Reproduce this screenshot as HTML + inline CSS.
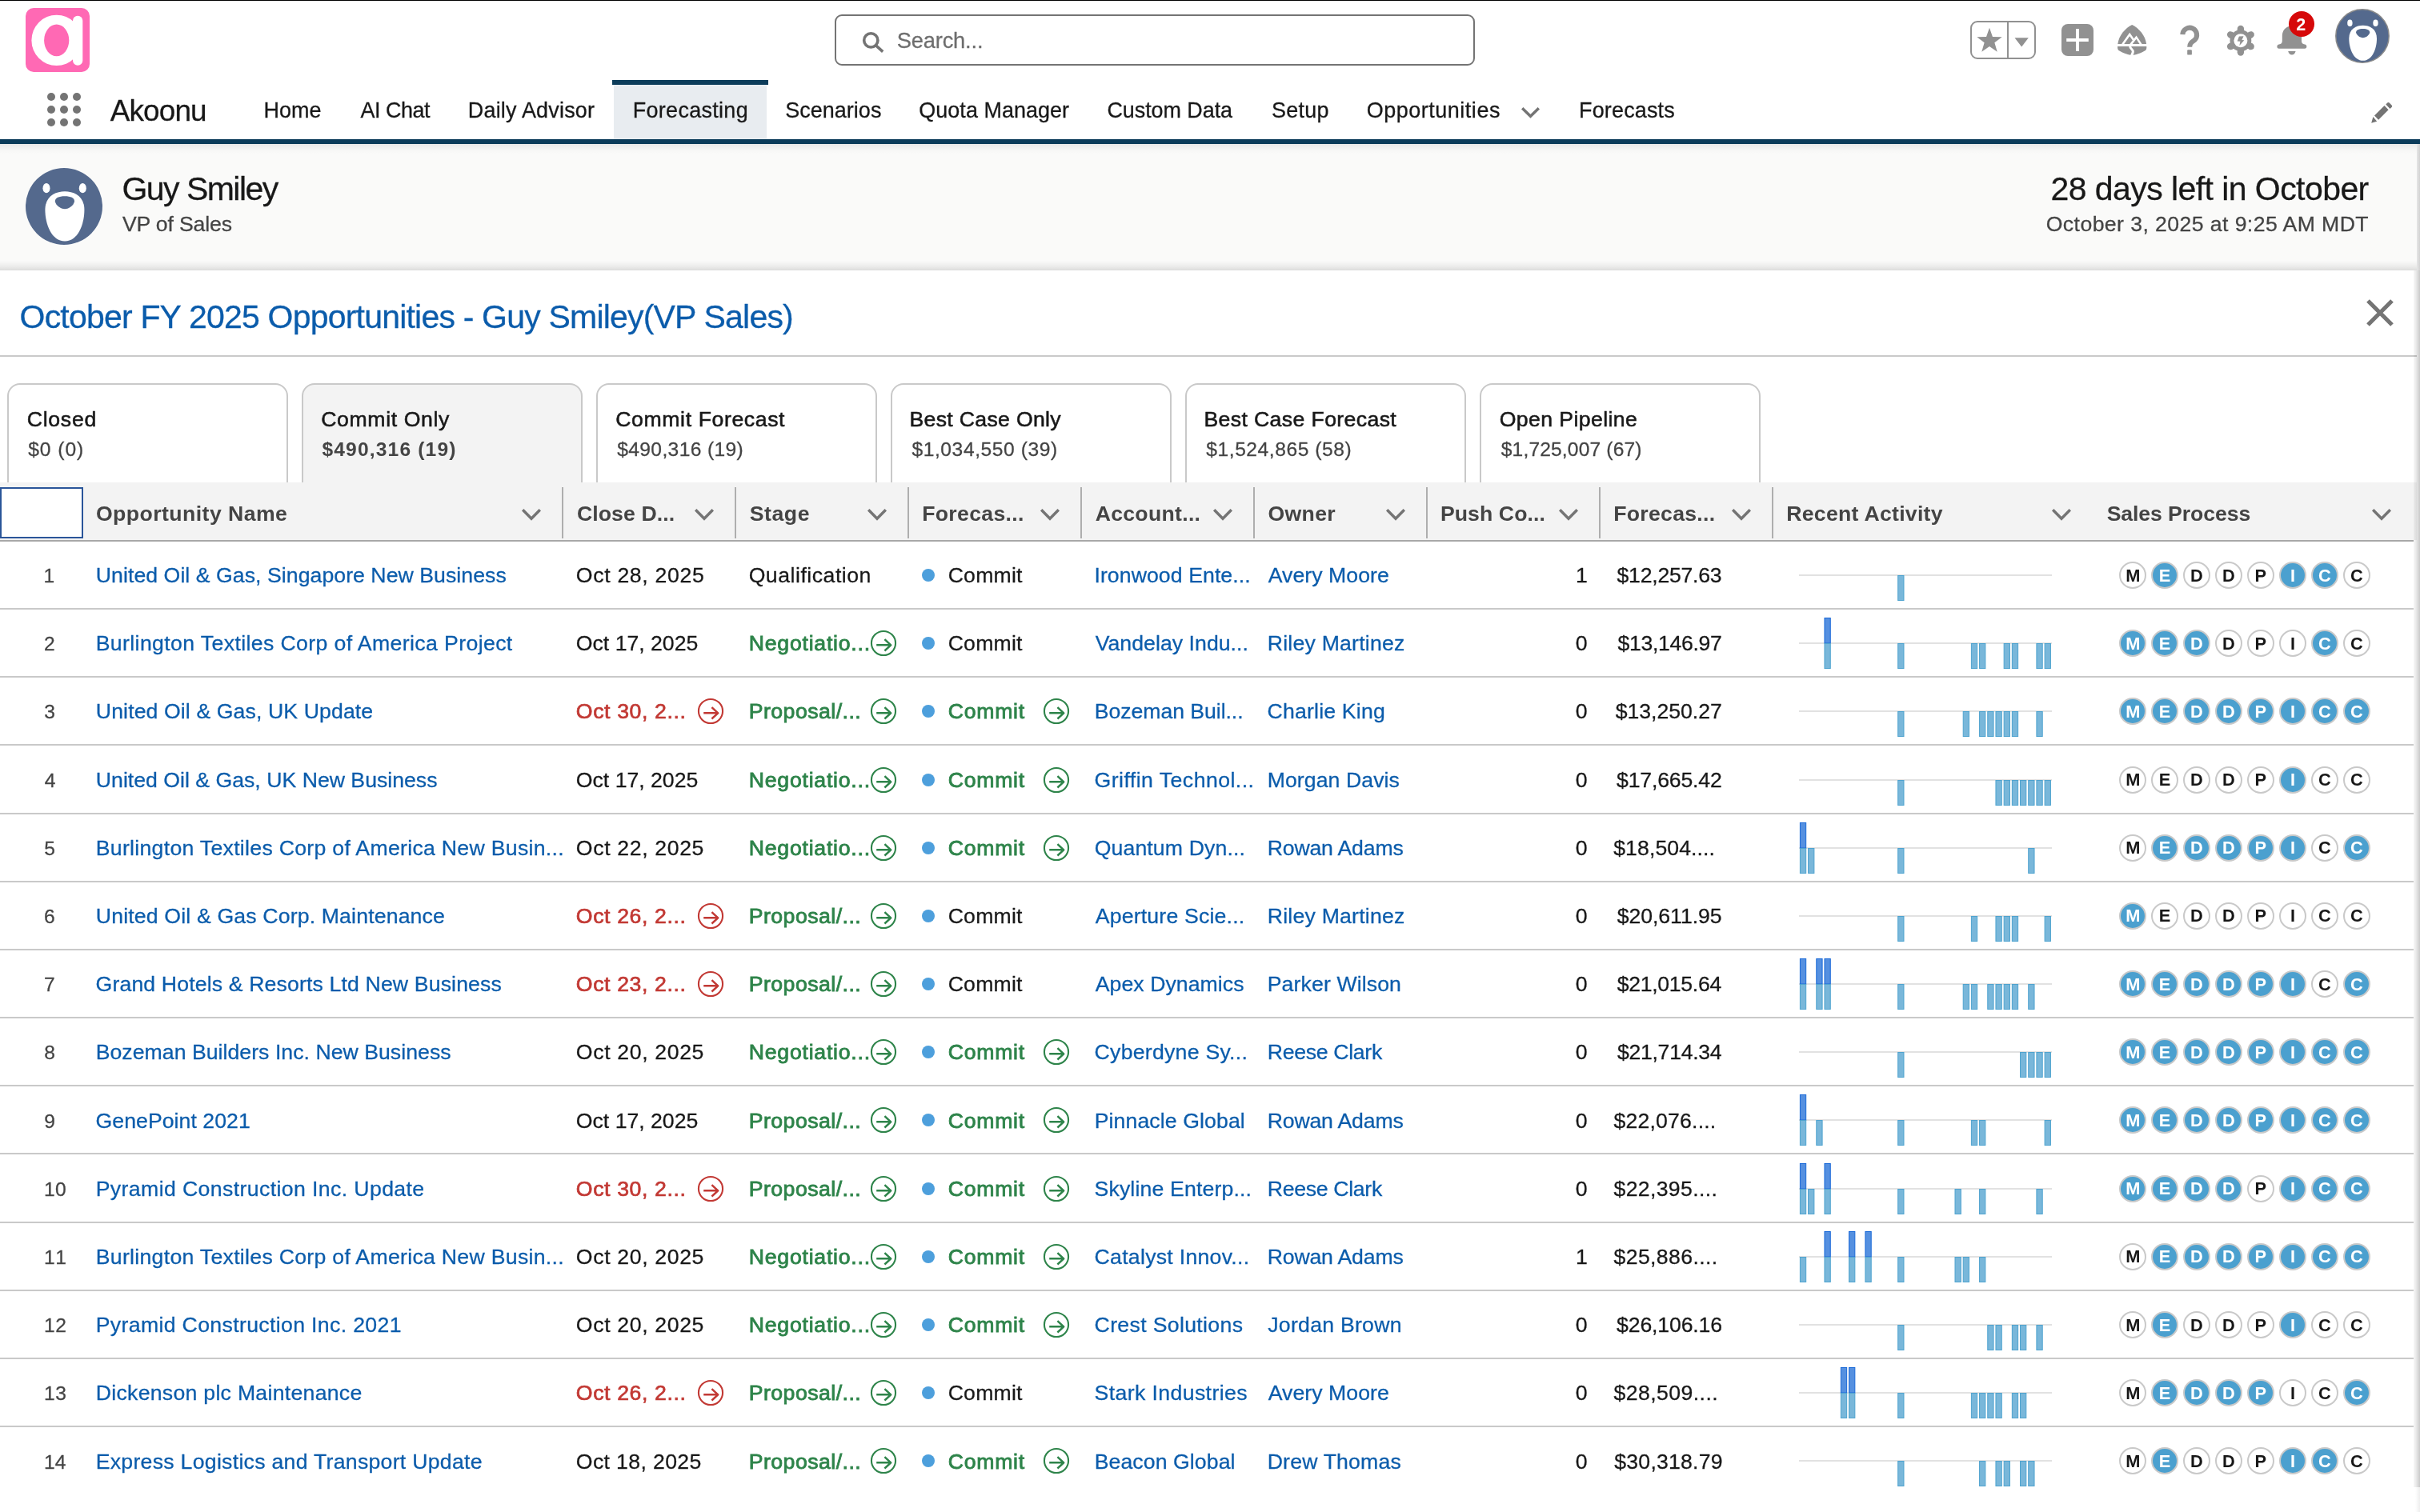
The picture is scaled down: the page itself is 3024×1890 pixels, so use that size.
<!DOCTYPE html><html><head><meta charset="utf-8"><title>Akoonu Forecasting</title><style>
html,body{margin:0;padding:0;background:#fff}
body{width:3024px;height:1890px;overflow:hidden;position:relative;font-family:"Liberation Sans",sans-serif}
#w{position:absolute;left:0;top:0;width:3024px;height:1890px;overflow:hidden;will-change:transform}
#w>div,#w>svg,#w>span{position:absolute;display:block}
#w>span{white-space:nowrap;line-height:1}

</style></head><body><div id="w">
<div style="left:0px;top:0px;width:3024px;height:1px;background:#000"></div>
<svg style="left:32px;top:10px" width="80" height="80" viewBox="0 0 80 80"><rect width="80" height="80" rx="10" fill="#ff69b4"/>
<ellipse cx="38.7" cy="40.4" rx="31.3" ry="31.7" fill="#fff"/><rect x="59" y="9.8" width="12.3" height="62" rx="6.1" fill="#fff"/>
<ellipse cx="38.7" cy="40.4" rx="15.6" ry="19.8" fill="#ff69b4"/></svg>
<div style="left:1043px;top:18px;width:800px;height:64px;box-sizing:border-box;border:2px solid #747474;border-radius:9px;background:#fff"></div>
<svg style="left:1074px;top:36px" width="36" height="36" viewBox="0 0 36 36" fill="none" stroke="#747474" stroke-width="3.6"><circle cx="14.3" cy="14.4" r="8.6"/><path d="M20.6 20.9 L29.2 28.6" stroke-linecap="butt"/></svg>
<span style="left:1120.76px;top:37px;font-size:27.27px;color:#6e6e6e;letter-spacing:-0.175px;-webkit-text-stroke:0.28px #6e6e6e">Search...</span>
<div style="left:2462px;top:26px;width:82px;height:48px;box-sizing:border-box;border:2px solid #919191;border-radius:9px;background:#fff"></div>
<div style="left:2508px;top:27px;width:2px;height:46px;background:#919191"></div>
<svg style="left:2462px;top:26px" width="82" height="48" viewBox="0 0 82 48"><polygon points="24.00,8.80 27.94,19.88 39.69,20.20 30.37,27.37 33.70,38.65 24.00,32.00 14.30,38.65 17.63,27.37 8.31,20.20 20.06,19.88" fill="#919191"/><polygon points="55.5,21.2 72.8,21.2 64.2,32.6" fill="#919191"/></svg>
<svg style="left:2576px;top:30px" width="40" height="40" viewBox="0 0 40 40"><rect width="40" height="40" rx="8" fill="#919191"/><path d="M6.2 20H33.8M20 6V34" stroke="#fff" stroke-width="3.8"/></svg>
<svg style="left:2644px;top:30px" width="40" height="40" viewBox="0 0 40 40"><path d="M20.2 1 C29 5.5 36.5 14 38 24.6 C38.6 29 38.6 31.8 37 33 C31 36.8 24 38.9 20.2 38.9 C16.4 38.9 9.4 36.8 3.4 33 C1.8 31.8 1.8 29 2.4 24.6 C3.9 14 11.4 5.5 20.2 1Z" fill="#919191"/>
<path d="M0 26.5H40" stroke="#fff" stroke-width="3.2"/><path d="M8.3 25.6 L17.2 13 L22.5 20.5" fill="none" stroke="#fff" stroke-width="2.6"/><path d="M18.5 25.6 L25.5 16.6 L31.5 25.6" fill="none" stroke="#fff" stroke-width="2.6"/>
<path d="M17.6 27.5 C17.6 31.5 22.4 32 21.2 35.5 C20.8 36.8 20.3 37.8 19.6 39.5" fill="none" stroke="#fff" stroke-width="3"/></svg>
<svg style="left:2716px;top:28px" width="40" height="44" viewBox="0 0 40 44"><path d="M11.3 15.2 A8.9 8.9 0 1 1 26.2 22.2 C22.4 24.9 20.2 26.4 20.2 30.7" fill="none" stroke="#919191" stroke-width="6.1"/><rect x="17.2" y="34.2" width="5.7" height="6.4" rx="1.2" fill="#919191"/></svg>
<svg style="left:2780px;top:31px" width="40" height="40" viewBox="0 0 40 40" fill="#919191"><g transform="rotate(0 19.9 19.7)"><rect x="15.799999999999999" y="4.899999999999999" width="8.2" height="14.8"/><circle cx="19.9" cy="4.899999999999999" r="4.15"/></g><g transform="rotate(60 19.9 19.7)"><rect x="15.799999999999999" y="4.899999999999999" width="8.2" height="14.8"/><circle cx="19.9" cy="4.899999999999999" r="4.15"/></g><g transform="rotate(120 19.9 19.7)"><rect x="15.799999999999999" y="4.899999999999999" width="8.2" height="14.8"/><circle cx="19.9" cy="4.899999999999999" r="4.15"/></g><g transform="rotate(180 19.9 19.7)"><rect x="15.799999999999999" y="4.899999999999999" width="8.2" height="14.8"/><circle cx="19.9" cy="4.899999999999999" r="4.15"/></g><g transform="rotate(240 19.9 19.7)"><rect x="15.799999999999999" y="4.899999999999999" width="8.2" height="14.8"/><circle cx="19.9" cy="4.899999999999999" r="4.15"/></g><g transform="rotate(300 19.9 19.7)"><rect x="15.799999999999999" y="4.899999999999999" width="8.2" height="14.8"/><circle cx="19.9" cy="4.899999999999999" r="4.15"/></g><circle cx="19.9" cy="19.7" r="13.4"/><circle cx="19.9" cy="19.7" r="8.5" fill="#fff"/>
<path transform="translate(19.9 19.7)" d="M3.65 -5.5 L-2 -5.2 L-4.25 0.7 L-0.5 1 L-1.55 6.3 L4.45 -0.4 L1.5 -0.75 Z"/></svg>
<svg style="left:2842px;top:28px" width="46" height="44" viewBox="0 0 46 44" fill="#919191"><path d="M21.9 4.4 C14 4.4 9.8 10 9.8 17 V23 C9.8 26 8.4 27.2 5.8 27.5 C2.6 27.9 2.6 32.8 5.8 32.8 H38 C41.2 32.8 41.2 27.9 38 27.5 C35.4 27.2 34 26 34 23 V17 C34 10 29.8 4.4 21.9 4.4Z"/><path d="M17.2 36 H26.6 C25.8 39.2 24 40.6 21.9 40.6 C19.8 40.6 18 39.2 17.2 36Z"/></svg>
<div style="left:2860px;top:14px;width:32px;height:32px;border-radius:50%;background:#d6090a"></div>
<span style="left:2869.25px;top:21px;font-size:21.52px;color:#fff;letter-spacing:0.248px;font-weight:700">2</span>
<svg style="left:2918px;top:11px" width="68" height="68" viewBox="0 0 68 68"><circle cx="34" cy="34" r="33.2" fill="#54698d" stroke="#8a8a8a" stroke-width="1.5"/>
<ellipse cx="18.4" cy="17.8" rx="3.2" ry="4.3" fill="#fff"/><ellipse cx="50.5" cy="17.8" rx="3.2" ry="4.3" fill="#fff"/>
<path d="M34.7 20.7 C43 20.7 52 25 52 37 C52 50 46.3 64.8 34.7 64.8 C23.1 64.8 17.3 50 17.3 37 C17.3 25 26.4 20.7 34.7 20.7Z" fill="#fff"/>
<path d="M34.7 24.9 C40 24.9 43.2 26.5 43.2 29.3 C43.2 32.5 38.5 36.3 34.7 36.3 C30.9 36.3 26.1 32.5 26.1 29.3 C26.1 26.5 29.4 24.9 34.7 24.9Z" fill="#54698d"/></svg>
<svg style="left:0;top:0" width="120" height="170" viewBox="0 0 120 170" fill="#747474"><circle cx="64" cy="121" r="5"/><circle cx="64" cy="137" r="5"/><circle cx="64" cy="153" r="5"/><circle cx="80" cy="121" r="5"/><circle cx="80" cy="137" r="5"/><circle cx="80" cy="153" r="5"/><circle cx="96" cy="121" r="5"/><circle cx="96" cy="137" r="5"/><circle cx="96" cy="153" r="5"/></svg>
<span style="left:137.73px;top:121px;font-size:36.90px;color:#181818;letter-spacing:-0.841px;-webkit-text-stroke:0.28px #181818">Akoonu</span>
<div style="left:765px;top:100px;width:195px;height:6px;background:#0c3c5a"></div>
<div style="left:767px;top:106px;width:191px;height:68px;background:#e8ecf0"></div>
<span style="left:329.49px;top:125px;font-size:26.96px;color:#181818;letter-spacing:0.034px;-webkit-text-stroke:0.28px #181818">Home</span>
<span style="left:450.45px;top:125px;font-size:26.96px;color:#181818;letter-spacing:-0.490px;-webkit-text-stroke:0.28px #181818">AI Chat</span>
<span style="left:584.79px;top:125px;font-size:26.96px;color:#181818;letter-spacing:0.205px;-webkit-text-stroke:0.28px #181818">Daily Advisor</span>
<span style="left:790.79px;top:125px;font-size:26.96px;color:#181818;letter-spacing:0.302px;-webkit-text-stroke:0.28px #181818">Forecasting</span>
<span style="left:981.18px;top:125px;font-size:26.96px;color:#181818;letter-spacing:0.042px;-webkit-text-stroke:0.28px #181818">Scenarios</span>
<span style="left:1148.32px;top:125px;font-size:26.96px;color:#181818;letter-spacing:0.036px;-webkit-text-stroke:0.28px #181818">Quota Manager</span>
<span style="left:1383.43px;top:125px;font-size:26.96px;color:#181818;letter-spacing:-0.063px;-webkit-text-stroke:0.28px #181818">Custom Data</span>
<span style="left:1589.08px;top:125px;font-size:26.96px;color:#181818;letter-spacing:0.230px;-webkit-text-stroke:0.28px #181818">Setup</span>
<span style="left:1707.82px;top:125px;font-size:26.96px;color:#181818;letter-spacing:0.520px;-webkit-text-stroke:0.28px #181818">Opportunities</span>
<span style="left:1972.99px;top:125px;font-size:26.96px;color:#181818;letter-spacing:0.182px;-webkit-text-stroke:0.28px #181818">Forecasts</span>
<svg style="left:1897.5px;top:131.25px" width="29" height="18.5" viewBox="-3 -3 29 18.5"><path d="M1.2 1.2 L11.5 11.3 L21.8 1.2" fill="none" stroke="#747474" stroke-width="3.4" stroke-linejoin="miter"/></svg>
<svg style="left:2958px;top:124px" width="36" height="36" viewBox="0 0 36 36" fill="#747474"><path d="M21.5 8 L26.6 13.2 L14.1 25.7 L9 20.5 Z"/><path d="M23.3 6.4 L25.2 4.6 C25.9 3.9 27 3.9 27.7 4.6 L30.6 7.4 C31.3 8.1 31.3 9.2 30.6 9.9 L28.5 11.9 Z"/><path d="M7.4 22.1 L12.2 27.7 L5.2 29.8 Z"/></svg>
<div style="left:0px;top:174px;width:3024px;height:6px;background:#0c3c5a"></div>
<div style="left:0px;top:180px;width:3021px;height:157.5px;background:linear-gradient(#e9e9e8 0,#f6f6f5 7px,#fafaf9 12px,#fafaf9 146px,#ececeb 153px,#dededd 157.5px)"></div>
<svg style="left:32px;top:210px" width="96" height="96" viewBox="0 0 68 68"><circle cx="34" cy="34" r="34" fill="#54698d"/>
<ellipse cx="18.4" cy="17.8" rx="3.2" ry="4.3" fill="#fff"/><ellipse cx="50.5" cy="17.8" rx="3.2" ry="4.3" fill="#fff"/>
<path d="M34.7 20.7 C43 20.7 52 25 52 37 C52 50 46.3 64.8 34.7 64.8 C23.1 64.8 17.3 50 17.3 37 C17.3 25 26.4 20.7 34.7 20.7Z" fill="#fff"/>
<path d="M34.7 24.9 C40 24.9 43.2 26.5 43.2 29.3 C43.2 32.5 38.5 36.3 34.7 36.3 C30.9 36.3 26.1 32.5 26.1 29.3 C26.1 26.5 29.4 24.9 34.7 24.9Z" fill="#54698d"/></svg>
<span style="left:152.44px;top:216px;font-size:41.00px;color:#181818;letter-spacing:-1.530px;-webkit-text-stroke:0.28px #181818">Guy Smiley</span>
<span style="left:152.88px;top:267px;font-size:26.65px;color:#444;letter-spacing:-0.164px;-webkit-text-stroke:0.28px #444">VP of Sales</span>
<span style="left:2562.44px;top:216px;font-size:41.00px;color:#181818;letter-spacing:-0.563px;-webkit-text-stroke:0.28px #181818">28 days left in October</span>
<span style="left:2556.74px;top:267px;font-size:26.65px;color:#444;letter-spacing:0.412px;-webkit-text-stroke:0.28px #444">October 3, 2025 at 9:25 AM MDT</span>
<div style="left:3020px;top:180px;width:4px;height:158px;background:linear-gradient(90deg,#e6e6e6,#d2d2d2)"></div>
<span style="left:24.56px;top:376px;font-size:41.00px;color:#0b5cab;letter-spacing:-0.800px;-webkit-text-stroke:0.28px #0b5cab">October FY 2025 Opportunities - Guy Smiley(VP Sales)</span>
<svg style="left:2952px;top:369px" width="44" height="44" viewBox="0 0 44 44"><path d="M7 7 L37 37 M37 7 L7 37" stroke="#747474" stroke-width="5.2" stroke-linecap="butt"/></svg>
<div style="left:0px;top:444px;width:3020px;height:2px;background:#c9c9c9"></div>
<div style="left:9px;top:479px;width:351px;height:140px;box-sizing:border-box;border:2px solid #c9c9c9;border-radius:16px;background:#fff"></div>
<span style="left:33.65px;top:511px;font-size:26.65px;color:#181818;letter-spacing:0.747px;-webkit-text-stroke:0.55px #181818">Closed</span>
<span style="left:35.24px;top:550px;font-size:24.60px;color:#444;letter-spacing:0.948px;-webkit-text-stroke:0.28px #444">$0 (0)</span>
<div style="left:377px;top:479px;width:351px;height:140px;box-sizing:border-box;border:2px solid #c9c9c9;border-radius:16px;background:#f3f3f3"></div>
<span style="left:401.25px;top:511px;font-size:26.65px;color:#181818;letter-spacing:0.615px;-webkit-text-stroke:0.55px #181818">Commit Only</span>
<span style="left:402.48px;top:550px;font-size:24.60px;color:#444;letter-spacing:1.149px;font-weight:700">$490,316 (19)</span>
<div style="left:745px;top:479px;width:351px;height:140px;box-sizing:border-box;border:2px solid #c9c9c9;border-radius:16px;background:#fff"></div>
<span style="left:769.25px;top:511px;font-size:26.65px;color:#181818;letter-spacing:0.604px;-webkit-text-stroke:0.55px #181818">Commit Forecast</span>
<span style="left:771.24px;top:550px;font-size:24.60px;color:#444;letter-spacing:0.369px;-webkit-text-stroke:0.28px #444">$490,316 (19)</span>
<div style="left:1113px;top:479px;width:351px;height:140px;box-sizing:border-box;border:2px solid #c9c9c9;border-radius:16px;background:#fff"></div>
<span style="left:1136.51px;top:511px;font-size:26.65px;color:#181818;letter-spacing:0.311px;-webkit-text-stroke:0.55px #181818">Best Case Only</span>
<span style="left:1139.44px;top:550px;font-size:24.60px;color:#444;letter-spacing:0.580px;-webkit-text-stroke:0.28px #444">$1,034,550 (39)</span>
<div style="left:1481px;top:479px;width:351px;height:140px;box-sizing:border-box;border:2px solid #c9c9c9;border-radius:16px;background:#fff"></div>
<span style="left:1504.41px;top:511px;font-size:26.65px;color:#181818;letter-spacing:0.378px;-webkit-text-stroke:0.55px #181818">Best Case Forecast</span>
<span style="left:1507.34px;top:550px;font-size:24.60px;color:#444;letter-spacing:0.544px;-webkit-text-stroke:0.28px #444">$1,524,865 (58)</span>
<div style="left:1849px;top:479px;width:351px;height:140px;box-sizing:border-box;border:2px solid #c9c9c9;border-radius:16px;background:#fff"></div>
<span style="left:1873.74px;top:511px;font-size:26.65px;color:#181818;letter-spacing:0.389px;-webkit-text-stroke:0.55px #181818">Open Pipeline</span>
<span style="left:1875.74px;top:550px;font-size:24.60px;color:#444;letter-spacing:0.151px;-webkit-text-stroke:0.28px #444">$1,725,007 (67)</span>
<div style="left:0px;top:603px;width:3020px;height:72px;background:#f3f3f3"></div>
<div style="left:0px;top:675px;width:3016px;height:2px;background:#a8a8a8"></div>
<div style="left:0px;top:609px;width:104px;height:64px;box-sizing:border-box;border:2px solid #2a5599;background:#fff"></div>
<div style="left:702px;top:609px;width:2px;height:64px;background:#aeaeae"></div>
<div style="left:918px;top:609px;width:2px;height:64px;background:#aeaeae"></div>
<div style="left:1134px;top:609px;width:2px;height:64px;background:#aeaeae"></div>
<div style="left:1350px;top:609px;width:2px;height:64px;background:#aeaeae"></div>
<div style="left:1566px;top:609px;width:2px;height:64px;background:#aeaeae"></div>
<div style="left:1782px;top:609px;width:2px;height:64px;background:#aeaeae"></div>
<div style="left:1998px;top:609px;width:2px;height:64px;background:#aeaeae"></div>
<div style="left:2214px;top:609px;width:2px;height:64px;background:#aeaeae"></div>
<span style="left:119.91px;top:629px;font-size:26.65px;color:#444;letter-spacing:0.441px;font-weight:700">Opportunity Name</span>
<svg style="left:649.0px;top:633.25px" width="30" height="19.5" viewBox="-3 -3 30 19.5"><path d="M1.2 1.2 L12.0 12.3 L22.8 1.2" fill="none" stroke="#747474" stroke-width="3.4" stroke-linejoin="miter"/></svg>
<span style="left:720.91px;top:629px;font-size:26.65px;color:#444;letter-spacing:0.091px;font-weight:700">Close D...</span>
<svg style="left:865.0px;top:633.25px" width="30" height="19.5" viewBox="-3 -3 30 19.5"><path d="M1.2 1.2 L12.0 12.3 L22.8 1.2" fill="none" stroke="#747474" stroke-width="3.4" stroke-linejoin="miter"/></svg>
<span style="left:936.73px;top:629px;font-size:26.65px;color:#444;letter-spacing:0.558px;font-weight:700">Stage</span>
<svg style="left:1081.0px;top:633.25px" width="30" height="19.5" viewBox="-3 -3 30 19.5"><path d="M1.2 1.2 L12.0 12.3 L22.8 1.2" fill="none" stroke="#747474" stroke-width="3.4" stroke-linejoin="miter"/></svg>
<span style="left:1152.22px;top:629px;font-size:26.65px;color:#444;letter-spacing:0.303px;font-weight:700">Forecas...</span>
<svg style="left:1297.0px;top:633.25px" width="30" height="19.5" viewBox="-3 -3 30 19.5"><path d="M1.2 1.2 L12.0 12.3 L22.8 1.2" fill="none" stroke="#747474" stroke-width="3.4" stroke-linejoin="miter"/></svg>
<span style="left:1368.64px;top:629px;font-size:26.65px;color:#444;letter-spacing:0.291px;font-weight:700">Account...</span>
<svg style="left:1513.0px;top:633.25px" width="30" height="19.5" viewBox="-3 -3 30 19.5"><path d="M1.2 1.2 L12.0 12.3 L22.8 1.2" fill="none" stroke="#747474" stroke-width="3.4" stroke-linejoin="miter"/></svg>
<span style="left:1584.41px;top:629px;font-size:26.65px;color:#444;letter-spacing:0.348px;font-weight:700">Owner</span>
<svg style="left:1729.0px;top:633.25px" width="30" height="19.5" viewBox="-3 -3 30 19.5"><path d="M1.2 1.2 L12.0 12.3 L22.8 1.2" fill="none" stroke="#747474" stroke-width="3.4" stroke-linejoin="miter"/></svg>
<span style="left:1799.92px;top:629px;font-size:26.65px;color:#444;letter-spacing:0.084px;font-weight:700">Push Co...</span>
<svg style="left:1945.0px;top:633.25px" width="30" height="19.5" viewBox="-3 -3 30 19.5"><path d="M1.2 1.2 L12.0 12.3 L22.8 1.2" fill="none" stroke="#747474" stroke-width="3.4" stroke-linejoin="miter"/></svg>
<span style="left:2016.22px;top:629px;font-size:26.65px;color:#444;letter-spacing:0.281px;font-weight:700">Forecas...</span>
<svg style="left:2161.0px;top:633.25px" width="30" height="19.5" viewBox="-3 -3 30 19.5"><path d="M1.2 1.2 L12.0 12.3 L22.8 1.2" fill="none" stroke="#747474" stroke-width="3.4" stroke-linejoin="miter"/></svg>
<span style="left:2232.22px;top:629px;font-size:26.65px;color:#444;letter-spacing:0.274px;font-weight:700">Recent Activity</span>
<svg style="left:2561.0px;top:633.25px" width="30" height="19.5" viewBox="-3 -3 30 19.5"><path d="M1.2 1.2 L12.0 12.3 L22.8 1.2" fill="none" stroke="#747474" stroke-width="3.4" stroke-linejoin="miter"/></svg>
<span style="left:2632.63px;top:629px;font-size:26.65px;color:#444;letter-spacing:-0.087px;font-weight:700">Sales Process</span>
<svg style="left:2961.0px;top:633.25px" width="30" height="19.5" viewBox="-3 -3 30 19.5"><path d="M1.2 1.2 L12.0 12.3 L22.8 1.2" fill="none" stroke="#747474" stroke-width="3.4" stroke-linejoin="miter"/></svg>
<div style="left:0px;top:760px;width:3016px;height:2px;background:#c9c9c9"></div>
<span style="left:54.43px;top:708px;font-size:24.60px;color:#444;letter-spacing:0.284px;-webkit-text-stroke:0.28px #444">1</span>
<span style="left:119.84px;top:706px;font-size:26.65px;color:#0b5cab;letter-spacing:0.053px;-webkit-text-stroke:0.28px #0b5cab">United Oil &amp; Gas, Singapore New Business</span>
<span style="left:719.84px;top:706px;font-size:26.65px;color:#181818;letter-spacing:0.676px;-webkit-text-stroke:0.28px #181818">Oct 28, 2025</span>
<span style="left:935.64px;top:706px;font-size:26.65px;color:#181818;letter-spacing:0.515px;-webkit-text-stroke:0.28px #181818">Qualification</span>
<div style="left:1152px;top:711.0px;width:16px;height:16px;border-radius:50%;background:#4d9fdc"></div>
<span style="left:1184.65px;top:706px;font-size:26.65px;color:#181818;letter-spacing:0.217px;-webkit-text-stroke:0.28px #181818">Commit</span>
<span style="left:1367.44px;top:706px;font-size:26.65px;color:#0b5cab;letter-spacing:0.078px;-webkit-text-stroke:0.28px #0b5cab">Ironwood Ente...</span>
<span style="left:1584.75px;top:706px;font-size:26.65px;color:#0b5cab;letter-spacing:0.050px;-webkit-text-stroke:0.28px #0b5cab">Avery Moore</span>
<span style="left:1968.97px;top:706px;font-size:26.65px;color:#181818;letter-spacing:0.307px;-webkit-text-stroke:0.28px #181818">1</span>
<span style="left:2020.51px;top:706px;font-size:26.65px;color:#181818;letter-spacing:-0.243px;-webkit-text-stroke:0.28px #181818">$12,257.63</span>
<svg style="left:2240px;top:683.00px" width="332" height="72" viewBox="2240 -36 332 72"><rect x="2248" y="-1" width="316" height="2" fill="#e2e2e2"/><rect x="2371.68" y="0.5" width="7.3" height="31" fill="#79b7da" stroke="#4ea3cf" stroke-width="1"/></svg>
<div style="left:2648.3px;top:702.0px;width:34px;height:34px;box-sizing:border-box;border-radius:50%;border:2px solid #c9c9c9;background:#fff"></div>
<span style="left:2656.21px;top:709px;font-size:21.83px;color:#181818;font-weight:700">M</span>
<div style="left:2688.3px;top:702.0px;width:34px;height:34px;box-sizing:border-box;border-radius:50%;border:2px solid #c9c9c9;background:#4ba0cf"></div>
<span style="left:2697.68px;top:709px;font-size:21.83px;color:#fff;font-weight:700">E</span>
<div style="left:2728.2px;top:702.0px;width:34px;height:34px;box-sizing:border-box;border-radius:50%;border:2px solid #c9c9c9;background:#fff"></div>
<span style="left:2737.09px;top:709px;font-size:21.83px;color:#181818;font-weight:700">D</span>
<div style="left:2768.2px;top:702.0px;width:34px;height:34px;box-sizing:border-box;border-radius:50%;border:2px solid #c9c9c9;background:#fff"></div>
<span style="left:2777.06px;top:709px;font-size:21.83px;color:#181818;font-weight:700">D</span>
<div style="left:2808.2px;top:702.0px;width:34px;height:34px;box-sizing:border-box;border-radius:50%;border:2px solid #c9c9c9;background:#fff"></div>
<span style="left:2817.54px;top:709px;font-size:21.83px;color:#181818;font-weight:700">P</span>
<div style="left:2848.2px;top:702.0px;width:34px;height:34px;box-sizing:border-box;border-radius:50%;border:2px solid #c9c9c9;background:#4ba0cf"></div>
<span style="left:2862.11px;top:709px;font-size:21.83px;color:#fff;font-weight:700">I</span>
<div style="left:2888.1px;top:702.0px;width:34px;height:34px;box-sizing:border-box;border-radius:50%;border:2px solid #c9c9c9;background:#4ba0cf"></div>
<span style="left:2897.09px;top:709px;font-size:21.83px;color:#fff;font-weight:700">C</span>
<div style="left:2928.1px;top:702.0px;width:34px;height:34px;box-sizing:border-box;border-radius:50%;border:2px solid #c9c9c9;background:#fff"></div>
<span style="left:2937.06px;top:709px;font-size:21.83px;color:#181818;font-weight:700">C</span>
<div style="left:0px;top:845px;width:3016px;height:2px;background:#c9c9c9"></div>
<span style="left:55.06px;top:793px;font-size:24.60px;color:#444;letter-spacing:0.284px;-webkit-text-stroke:0.28px #444">2</span>
<span style="left:119.71px;top:791px;font-size:26.65px;color:#0b5cab;letter-spacing:0.384px;-webkit-text-stroke:0.28px #0b5cab">Burlington Textiles Corp of America Project</span>
<span style="left:719.84px;top:791px;font-size:26.65px;color:#181818;letter-spacing:-0.006px;-webkit-text-stroke:0.28px #181818">Oct 17, 2025</span>
<span style="left:935.71px;top:791px;font-size:26.65px;color:#2e844a;letter-spacing:0.771px;-webkit-text-stroke:0.85px #2e844a">Negotiatio...</span>
<svg style="left:1086px;top:786.1800000000001px" width="36" height="36" viewBox="-18 -18 36 36" fill="none" stroke="#2e844a" stroke-width="2.1"><circle r="15.05"/><path d="M-8.8 2.3 H8.6 M1.4 -4.9 L9.2 2.3 L1.4 9.5" stroke-width="2.5" stroke-linejoin="round"/></svg>
<div style="left:1152px;top:796.1800000000001px;width:16px;height:16px;border-radius:50%;background:#4d9fdc"></div>
<span style="left:1184.65px;top:791px;font-size:26.65px;color:#181818;letter-spacing:0.217px;-webkit-text-stroke:0.28px #181818">Commit</span>
<span style="left:1368.68px;top:791px;font-size:26.65px;color:#0b5cab;letter-spacing:0.045px;-webkit-text-stroke:0.28px #0b5cab">Vandelay Indu...</span>
<span style="left:1583.71px;top:791px;font-size:26.65px;color:#0b5cab;letter-spacing:0.218px;-webkit-text-stroke:0.28px #0b5cab">Riley Martinez</span>
<span style="left:1968.71px;top:791px;font-size:26.65px;color:#181818;letter-spacing:0.307px;-webkit-text-stroke:0.28px #181818">0</span>
<span style="left:2021.61px;top:791px;font-size:26.65px;color:#181818;letter-spacing:-0.346px;-webkit-text-stroke:0.28px #181818">$13,146.97</span>
<svg style="left:2240px;top:768.18px" width="332" height="72" viewBox="2240 -36 332 72"><rect x="2248" y="-1" width="316" height="2" fill="#e2e2e2"/><rect x="2279.97" y="-31.5" width="7.3" height="31.5" fill="#5590e0" stroke="#1a69d8" stroke-width="1"/><rect x="2279.97" y="0.5" width="7.3" height="31" fill="#79b7da" stroke="#4ea3cf" stroke-width="1"/><rect x="2371.68" y="0.5" width="7.3" height="31" fill="#79b7da" stroke="#4ea3cf" stroke-width="1"/><rect x="2463.39" y="0.5" width="7.3" height="31" fill="#79b7da" stroke="#4ea3cf" stroke-width="1"/><rect x="2473.58" y="0.5" width="7.3" height="31" fill="#79b7da" stroke="#4ea3cf" stroke-width="1"/><rect x="2504.15" y="0.5" width="7.3" height="31" fill="#79b7da" stroke="#4ea3cf" stroke-width="1"/><rect x="2514.34" y="0.5" width="7.3" height="31" fill="#79b7da" stroke="#4ea3cf" stroke-width="1"/><rect x="2544.91" y="0.5" width="7.3" height="31" fill="#79b7da" stroke="#4ea3cf" stroke-width="1"/><rect x="2555.10" y="0.5" width="7.3" height="31" fill="#79b7da" stroke="#4ea3cf" stroke-width="1"/></svg>
<div style="left:2648.3px;top:787.2px;width:34px;height:34px;box-sizing:border-box;border-radius:50%;border:2px solid #c9c9c9;background:#4ba0cf"></div>
<span style="left:2656.21px;top:794px;font-size:21.83px;color:#fff;font-weight:700">M</span>
<div style="left:2688.3px;top:787.2px;width:34px;height:34px;box-sizing:border-box;border-radius:50%;border:2px solid #c9c9c9;background:#4ba0cf"></div>
<span style="left:2697.68px;top:794px;font-size:21.83px;color:#fff;font-weight:700">E</span>
<div style="left:2728.2px;top:787.2px;width:34px;height:34px;box-sizing:border-box;border-radius:50%;border:2px solid #c9c9c9;background:#4ba0cf"></div>
<span style="left:2737.09px;top:794px;font-size:21.83px;color:#fff;font-weight:700">D</span>
<div style="left:2768.2px;top:787.2px;width:34px;height:34px;box-sizing:border-box;border-radius:50%;border:2px solid #c9c9c9;background:#fff"></div>
<span style="left:2777.06px;top:794px;font-size:21.83px;color:#181818;font-weight:700">D</span>
<div style="left:2808.2px;top:787.2px;width:34px;height:34px;box-sizing:border-box;border-radius:50%;border:2px solid #c9c9c9;background:#fff"></div>
<span style="left:2817.54px;top:794px;font-size:21.83px;color:#181818;font-weight:700">P</span>
<div style="left:2848.2px;top:787.2px;width:34px;height:34px;box-sizing:border-box;border-radius:50%;border:2px solid #c9c9c9;background:#fff"></div>
<span style="left:2862.11px;top:794px;font-size:21.83px;color:#181818;font-weight:700">I</span>
<div style="left:2888.1px;top:787.2px;width:34px;height:34px;box-sizing:border-box;border-radius:50%;border:2px solid #c9c9c9;background:#4ba0cf"></div>
<span style="left:2897.09px;top:794px;font-size:21.83px;color:#fff;font-weight:700">C</span>
<div style="left:2928.1px;top:787.2px;width:34px;height:34px;box-sizing:border-box;border-radius:50%;border:2px solid #c9c9c9;background:#fff"></div>
<span style="left:2937.06px;top:794px;font-size:21.83px;color:#181818;font-weight:700">C</span>
<div style="left:0px;top:930px;width:3016px;height:2px;background:#c9c9c9"></div>
<span style="left:55.36px;top:878px;font-size:24.60px;color:#444;letter-spacing:0.284px;-webkit-text-stroke:0.28px #444">3</span>
<span style="left:119.84px;top:876px;font-size:26.65px;color:#0b5cab;letter-spacing:0.108px;-webkit-text-stroke:0.28px #0b5cab">United Oil &amp; Gas, UK Update</span>
<span style="left:719.84px;top:876px;font-size:26.65px;color:#c23934;letter-spacing:0.626px;-webkit-text-stroke:0.7px #c23934">Oct 30, 2...</span>
<svg style="left:870.2px;top:871.36px" width="36" height="36" viewBox="-18 -18 36 36" fill="none" stroke="#c23934" stroke-width="2.1"><circle r="15.05"/><path d="M-8.8 2.3 H8.6 M1.4 -4.9 L9.2 2.3 L1.4 9.5" stroke-width="2.5" stroke-linejoin="round"/></svg>
<span style="left:935.71px;top:876px;font-size:26.65px;color:#2e844a;letter-spacing:0.478px;-webkit-text-stroke:0.85px #2e844a">Proposal/...</span>
<svg style="left:1086px;top:871.36px" width="36" height="36" viewBox="-18 -18 36 36" fill="none" stroke="#2e844a" stroke-width="2.1"><circle r="15.05"/><path d="M-8.8 2.3 H8.6 M1.4 -4.9 L9.2 2.3 L1.4 9.5" stroke-width="2.5" stroke-linejoin="round"/></svg>
<div style="left:1152px;top:881.36px;width:16px;height:16px;border-radius:50%;background:#4d9fdc"></div>
<span style="left:1184.65px;top:876px;font-size:26.65px;color:#2e844a;letter-spacing:0.757px;-webkit-text-stroke:0.85px #2e844a">Commit</span>
<svg style="left:1302px;top:871.36px" width="36" height="36" viewBox="-18 -18 36 36" fill="none" stroke="#2e844a" stroke-width="2.1"><circle r="15.05"/><path d="M-8.8 2.3 H8.6 M1.4 -4.9 L9.2 2.3 L1.4 9.5" stroke-width="2.5" stroke-linejoin="round"/></svg>
<span style="left:1367.71px;top:876px;font-size:26.65px;color:#0b5cab;letter-spacing:-0.047px;-webkit-text-stroke:0.28px #0b5cab">Bozeman Buil...</span>
<span style="left:1583.55px;top:876px;font-size:26.65px;color:#0b5cab;letter-spacing:0.186px;-webkit-text-stroke:0.28px #0b5cab">Charlie King</span>
<span style="left:1968.71px;top:876px;font-size:26.65px;color:#181818;letter-spacing:0.307px;-webkit-text-stroke:0.28px #181818">0</span>
<span style="left:2018.71px;top:876px;font-size:26.65px;color:#181818;letter-spacing:-0.024px;-webkit-text-stroke:0.28px #181818">$13,250.27</span>
<svg style="left:2240px;top:853.36px" width="332" height="72" viewBox="2240 -36 332 72"><rect x="2248" y="-1" width="316" height="2" fill="#e2e2e2"/><rect x="2371.68" y="0.5" width="7.3" height="31" fill="#79b7da" stroke="#4ea3cf" stroke-width="1"/><rect x="2453.20" y="0.5" width="7.3" height="31" fill="#79b7da" stroke="#4ea3cf" stroke-width="1"/><rect x="2473.58" y="0.5" width="7.3" height="31" fill="#79b7da" stroke="#4ea3cf" stroke-width="1"/><rect x="2483.77" y="0.5" width="7.3" height="31" fill="#79b7da" stroke="#4ea3cf" stroke-width="1"/><rect x="2493.96" y="0.5" width="7.3" height="31" fill="#79b7da" stroke="#4ea3cf" stroke-width="1"/><rect x="2504.15" y="0.5" width="7.3" height="31" fill="#79b7da" stroke="#4ea3cf" stroke-width="1"/><rect x="2514.34" y="0.5" width="7.3" height="31" fill="#79b7da" stroke="#4ea3cf" stroke-width="1"/><rect x="2544.91" y="0.5" width="7.3" height="31" fill="#79b7da" stroke="#4ea3cf" stroke-width="1"/></svg>
<div style="left:2648.3px;top:872.4px;width:34px;height:34px;box-sizing:border-box;border-radius:50%;border:2px solid #c9c9c9;background:#4ba0cf"></div>
<span style="left:2656.21px;top:879px;font-size:21.83px;color:#fff;font-weight:700">M</span>
<div style="left:2688.3px;top:872.4px;width:34px;height:34px;box-sizing:border-box;border-radius:50%;border:2px solid #c9c9c9;background:#4ba0cf"></div>
<span style="left:2697.68px;top:879px;font-size:21.83px;color:#fff;font-weight:700">E</span>
<div style="left:2728.2px;top:872.4px;width:34px;height:34px;box-sizing:border-box;border-radius:50%;border:2px solid #c9c9c9;background:#4ba0cf"></div>
<span style="left:2737.09px;top:879px;font-size:21.83px;color:#fff;font-weight:700">D</span>
<div style="left:2768.2px;top:872.4px;width:34px;height:34px;box-sizing:border-box;border-radius:50%;border:2px solid #c9c9c9;background:#4ba0cf"></div>
<span style="left:2777.06px;top:879px;font-size:21.83px;color:#fff;font-weight:700">D</span>
<div style="left:2808.2px;top:872.4px;width:34px;height:34px;box-sizing:border-box;border-radius:50%;border:2px solid #c9c9c9;background:#4ba0cf"></div>
<span style="left:2817.54px;top:879px;font-size:21.83px;color:#fff;font-weight:700">P</span>
<div style="left:2848.2px;top:872.4px;width:34px;height:34px;box-sizing:border-box;border-radius:50%;border:2px solid #c9c9c9;background:#4ba0cf"></div>
<span style="left:2862.11px;top:879px;font-size:21.83px;color:#fff;font-weight:700">I</span>
<div style="left:2888.1px;top:872.4px;width:34px;height:34px;box-sizing:border-box;border-radius:50%;border:2px solid #c9c9c9;background:#4ba0cf"></div>
<span style="left:2897.09px;top:879px;font-size:21.83px;color:#fff;font-weight:700">C</span>
<div style="left:2928.1px;top:872.4px;width:34px;height:34px;box-sizing:border-box;border-radius:50%;border:2px solid #c9c9c9;background:#4ba0cf"></div>
<span style="left:2937.06px;top:879px;font-size:21.83px;color:#fff;font-weight:700">C</span>
<div style="left:0px;top:1016px;width:3016px;height:2px;background:#c9c9c9"></div>
<span style="left:55.74px;top:964px;font-size:24.60px;color:#444;letter-spacing:0.284px;-webkit-text-stroke:0.28px #444">4</span>
<span style="left:119.84px;top:962px;font-size:26.65px;color:#0b5cab;letter-spacing:0.009px;-webkit-text-stroke:0.28px #0b5cab">United Oil &amp; Gas, UK New Business</span>
<span style="left:719.84px;top:962px;font-size:26.65px;color:#181818;letter-spacing:-0.006px;-webkit-text-stroke:0.28px #181818">Oct 17, 2025</span>
<span style="left:935.71px;top:962px;font-size:26.65px;color:#2e844a;letter-spacing:0.771px;-webkit-text-stroke:0.85px #2e844a">Negotiatio...</span>
<svg style="left:1086px;top:956.54px" width="36" height="36" viewBox="-18 -18 36 36" fill="none" stroke="#2e844a" stroke-width="2.1"><circle r="15.05"/><path d="M-8.8 2.3 H8.6 M1.4 -4.9 L9.2 2.3 L1.4 9.5" stroke-width="2.5" stroke-linejoin="round"/></svg>
<div style="left:1152px;top:966.54px;width:16px;height:16px;border-radius:50%;background:#4d9fdc"></div>
<span style="left:1184.65px;top:962px;font-size:26.65px;color:#2e844a;letter-spacing:0.757px;-webkit-text-stroke:0.85px #2e844a">Commit</span>
<svg style="left:1302px;top:956.54px" width="36" height="36" viewBox="-18 -18 36 36" fill="none" stroke="#2e844a" stroke-width="2.1"><circle r="15.05"/><path d="M-8.8 2.3 H8.6 M1.4 -4.9 L9.2 2.3 L1.4 9.5" stroke-width="2.5" stroke-linejoin="round"/></svg>
<span style="left:1367.56px;top:962px;font-size:26.65px;color:#0b5cab;letter-spacing:0.467px;-webkit-text-stroke:0.28px #0b5cab">Griffin Technol...</span>
<span style="left:1583.71px;top:962px;font-size:26.65px;color:#0b5cab;letter-spacing:0.081px;-webkit-text-stroke:0.28px #0b5cab">Morgan Davis</span>
<span style="left:1968.71px;top:962px;font-size:26.65px;color:#181818;letter-spacing:0.307px;-webkit-text-stroke:0.28px #181818">0</span>
<span style="left:2020.01px;top:962px;font-size:26.65px;color:#181818;letter-spacing:-0.169px;-webkit-text-stroke:0.28px #181818">$17,665.42</span>
<svg style="left:2240px;top:938.54px" width="332" height="72" viewBox="2240 -36 332 72"><rect x="2248" y="-1" width="316" height="2" fill="#e2e2e2"/><rect x="2371.68" y="0.5" width="7.3" height="31" fill="#79b7da" stroke="#4ea3cf" stroke-width="1"/><rect x="2493.96" y="0.5" width="7.3" height="31" fill="#79b7da" stroke="#4ea3cf" stroke-width="1"/><rect x="2504.15" y="0.5" width="7.3" height="31" fill="#79b7da" stroke="#4ea3cf" stroke-width="1"/><rect x="2514.34" y="0.5" width="7.3" height="31" fill="#79b7da" stroke="#4ea3cf" stroke-width="1"/><rect x="2524.53" y="0.5" width="7.3" height="31" fill="#79b7da" stroke="#4ea3cf" stroke-width="1"/><rect x="2534.72" y="0.5" width="7.3" height="31" fill="#79b7da" stroke="#4ea3cf" stroke-width="1"/><rect x="2544.91" y="0.5" width="7.3" height="31" fill="#79b7da" stroke="#4ea3cf" stroke-width="1"/><rect x="2555.10" y="0.5" width="7.3" height="31" fill="#79b7da" stroke="#4ea3cf" stroke-width="1"/></svg>
<div style="left:2648.3px;top:957.5px;width:34px;height:34px;box-sizing:border-box;border-radius:50%;border:2px solid #c9c9c9;background:#fff"></div>
<span style="left:2656.21px;top:964px;font-size:21.83px;color:#181818;font-weight:700">M</span>
<div style="left:2688.3px;top:957.5px;width:34px;height:34px;box-sizing:border-box;border-radius:50%;border:2px solid #c9c9c9;background:#fff"></div>
<span style="left:2697.68px;top:964px;font-size:21.83px;color:#181818;font-weight:700">E</span>
<div style="left:2728.2px;top:957.5px;width:34px;height:34px;box-sizing:border-box;border-radius:50%;border:2px solid #c9c9c9;background:#fff"></div>
<span style="left:2737.09px;top:964px;font-size:21.83px;color:#181818;font-weight:700">D</span>
<div style="left:2768.2px;top:957.5px;width:34px;height:34px;box-sizing:border-box;border-radius:50%;border:2px solid #c9c9c9;background:#fff"></div>
<span style="left:2777.06px;top:964px;font-size:21.83px;color:#181818;font-weight:700">D</span>
<div style="left:2808.2px;top:957.5px;width:34px;height:34px;box-sizing:border-box;border-radius:50%;border:2px solid #c9c9c9;background:#fff"></div>
<span style="left:2817.54px;top:964px;font-size:21.83px;color:#181818;font-weight:700">P</span>
<div style="left:2848.2px;top:957.5px;width:34px;height:34px;box-sizing:border-box;border-radius:50%;border:2px solid #c9c9c9;background:#4ba0cf"></div>
<span style="left:2862.11px;top:964px;font-size:21.83px;color:#fff;font-weight:700">I</span>
<div style="left:2888.1px;top:957.5px;width:34px;height:34px;box-sizing:border-box;border-radius:50%;border:2px solid #c9c9c9;background:#fff"></div>
<span style="left:2897.09px;top:964px;font-size:21.83px;color:#181818;font-weight:700">C</span>
<div style="left:2928.1px;top:957.5px;width:34px;height:34px;box-sizing:border-box;border-radius:50%;border:2px solid #c9c9c9;background:#fff"></div>
<span style="left:2937.06px;top:964px;font-size:21.83px;color:#181818;font-weight:700">C</span>
<div style="left:0px;top:1101px;width:3016px;height:2px;background:#c9c9c9"></div>
<span style="left:55.32px;top:1049px;font-size:24.60px;color:#444;letter-spacing:0.284px;-webkit-text-stroke:0.28px #444">5</span>
<span style="left:119.71px;top:1047px;font-size:26.65px;color:#0b5cab;letter-spacing:0.295px;-webkit-text-stroke:0.28px #0b5cab">Burlington Textiles Corp of America New Busin...</span>
<span style="left:719.84px;top:1047px;font-size:26.65px;color:#181818;letter-spacing:0.639px;-webkit-text-stroke:0.28px #181818">Oct 22, 2025</span>
<span style="left:935.71px;top:1047px;font-size:26.65px;color:#2e844a;letter-spacing:0.771px;-webkit-text-stroke:0.85px #2e844a">Negotiatio...</span>
<svg style="left:1086px;top:1041.72px" width="36" height="36" viewBox="-18 -18 36 36" fill="none" stroke="#2e844a" stroke-width="2.1"><circle r="15.05"/><path d="M-8.8 2.3 H8.6 M1.4 -4.9 L9.2 2.3 L1.4 9.5" stroke-width="2.5" stroke-linejoin="round"/></svg>
<div style="left:1152px;top:1051.72px;width:16px;height:16px;border-radius:50%;background:#4d9fdc"></div>
<span style="left:1184.65px;top:1047px;font-size:26.65px;color:#2e844a;letter-spacing:0.757px;-webkit-text-stroke:0.85px #2e844a">Commit</span>
<svg style="left:1302px;top:1041.72px" width="36" height="36" viewBox="-18 -18 36 36" fill="none" stroke="#2e844a" stroke-width="2.1"><circle r="15.05"/><path d="M-8.8 2.3 H8.6 M1.4 -4.9 L9.2 2.3 L1.4 9.5" stroke-width="2.5" stroke-linejoin="round"/></svg>
<span style="left:1367.64px;top:1047px;font-size:26.65px;color:#0b5cab;letter-spacing:0.132px;-webkit-text-stroke:0.28px #0b5cab">Quantum Dyn...</span>
<span style="left:1583.71px;top:1047px;font-size:26.65px;color:#0b5cab;letter-spacing:-0.173px;-webkit-text-stroke:0.28px #0b5cab">Rowan Adams</span>
<span style="left:1968.71px;top:1047px;font-size:26.65px;color:#181818;letter-spacing:0.307px;-webkit-text-stroke:0.28px #181818">0</span>
<span style="left:2016.21px;top:1047px;font-size:26.65px;color:#181818;letter-spacing:0.081px;-webkit-text-stroke:0.28px #181818">$18,504....</span>
<svg style="left:2240px;top:1023.72px" width="332" height="72" viewBox="2240 -36 332 72"><rect x="2248" y="-1" width="316" height="2" fill="#e2e2e2"/><rect x="2249.40" y="-31.5" width="7.3" height="31.5" fill="#5590e0" stroke="#1a69d8" stroke-width="1"/><rect x="2249.40" y="0.5" width="7.3" height="31" fill="#79b7da" stroke="#4ea3cf" stroke-width="1"/><rect x="2259.59" y="0.5" width="7.3" height="31" fill="#79b7da" stroke="#4ea3cf" stroke-width="1"/><rect x="2371.68" y="0.5" width="7.3" height="31" fill="#79b7da" stroke="#4ea3cf" stroke-width="1"/><rect x="2534.72" y="0.5" width="7.3" height="31" fill="#79b7da" stroke="#4ea3cf" stroke-width="1"/></svg>
<div style="left:2648.3px;top:1042.7px;width:34px;height:34px;box-sizing:border-box;border-radius:50%;border:2px solid #c9c9c9;background:#fff"></div>
<span style="left:2656.21px;top:1049px;font-size:21.83px;color:#181818;font-weight:700">M</span>
<div style="left:2688.3px;top:1042.7px;width:34px;height:34px;box-sizing:border-box;border-radius:50%;border:2px solid #c9c9c9;background:#4ba0cf"></div>
<span style="left:2697.68px;top:1049px;font-size:21.83px;color:#fff;font-weight:700">E</span>
<div style="left:2728.2px;top:1042.7px;width:34px;height:34px;box-sizing:border-box;border-radius:50%;border:2px solid #c9c9c9;background:#4ba0cf"></div>
<span style="left:2737.09px;top:1049px;font-size:21.83px;color:#fff;font-weight:700">D</span>
<div style="left:2768.2px;top:1042.7px;width:34px;height:34px;box-sizing:border-box;border-radius:50%;border:2px solid #c9c9c9;background:#4ba0cf"></div>
<span style="left:2777.06px;top:1049px;font-size:21.83px;color:#fff;font-weight:700">D</span>
<div style="left:2808.2px;top:1042.7px;width:34px;height:34px;box-sizing:border-box;border-radius:50%;border:2px solid #c9c9c9;background:#4ba0cf"></div>
<span style="left:2817.54px;top:1049px;font-size:21.83px;color:#fff;font-weight:700">P</span>
<div style="left:2848.2px;top:1042.7px;width:34px;height:34px;box-sizing:border-box;border-radius:50%;border:2px solid #c9c9c9;background:#4ba0cf"></div>
<span style="left:2862.11px;top:1049px;font-size:21.83px;color:#fff;font-weight:700">I</span>
<div style="left:2888.1px;top:1042.7px;width:34px;height:34px;box-sizing:border-box;border-radius:50%;border:2px solid #c9c9c9;background:#fff"></div>
<span style="left:2897.09px;top:1049px;font-size:21.83px;color:#181818;font-weight:700">C</span>
<div style="left:2928.1px;top:1042.7px;width:34px;height:34px;box-sizing:border-box;border-radius:50%;border:2px solid #c9c9c9;background:#4ba0cf"></div>
<span style="left:2937.06px;top:1049px;font-size:21.83px;color:#fff;font-weight:700">C</span>
<div style="left:0px;top:1186px;width:3016px;height:2px;background:#c9c9c9"></div>
<span style="left:55.05px;top:1134px;font-size:24.60px;color:#444;letter-spacing:0.284px;-webkit-text-stroke:0.28px #444">6</span>
<span style="left:119.84px;top:1132px;font-size:26.65px;color:#0b5cab;letter-spacing:0.156px;-webkit-text-stroke:0.28px #0b5cab">United Oil &amp; Gas Corp. Maintenance</span>
<span style="left:719.84px;top:1132px;font-size:26.65px;color:#c23934;letter-spacing:0.626px;-webkit-text-stroke:0.7px #c23934">Oct 26, 2...</span>
<svg style="left:870.2px;top:1126.9px" width="36" height="36" viewBox="-18 -18 36 36" fill="none" stroke="#c23934" stroke-width="2.1"><circle r="15.05"/><path d="M-8.8 2.3 H8.6 M1.4 -4.9 L9.2 2.3 L1.4 9.5" stroke-width="2.5" stroke-linejoin="round"/></svg>
<span style="left:935.71px;top:1132px;font-size:26.65px;color:#2e844a;letter-spacing:0.478px;-webkit-text-stroke:0.85px #2e844a">Proposal/...</span>
<svg style="left:1086px;top:1126.9px" width="36" height="36" viewBox="-18 -18 36 36" fill="none" stroke="#2e844a" stroke-width="2.1"><circle r="15.05"/><path d="M-8.8 2.3 H8.6 M1.4 -4.9 L9.2 2.3 L1.4 9.5" stroke-width="2.5" stroke-linejoin="round"/></svg>
<div style="left:1152px;top:1136.9px;width:16px;height:16px;border-radius:50%;background:#4d9fdc"></div>
<span style="left:1184.65px;top:1132px;font-size:26.65px;color:#181818;letter-spacing:0.217px;-webkit-text-stroke:0.28px #181818">Commit</span>
<span style="left:1368.75px;top:1132px;font-size:26.65px;color:#0b5cab;letter-spacing:0.184px;-webkit-text-stroke:0.28px #0b5cab">Aperture Scie...</span>
<span style="left:1583.71px;top:1132px;font-size:26.65px;color:#0b5cab;letter-spacing:0.218px;-webkit-text-stroke:0.28px #0b5cab">Riley Martinez</span>
<span style="left:1968.71px;top:1132px;font-size:26.65px;color:#181818;letter-spacing:0.307px;-webkit-text-stroke:0.28px #181818">0</span>
<span style="left:2020.71px;top:1132px;font-size:26.65px;color:#181818;letter-spacing:-0.050px;-webkit-text-stroke:0.28px #181818">$20,611.95</span>
<svg style="left:2240px;top:1108.90px" width="332" height="72" viewBox="2240 -36 332 72"><rect x="2248" y="-1" width="316" height="2" fill="#e2e2e2"/><rect x="2371.68" y="0.5" width="7.3" height="31" fill="#79b7da" stroke="#4ea3cf" stroke-width="1"/><rect x="2463.39" y="0.5" width="7.3" height="31" fill="#79b7da" stroke="#4ea3cf" stroke-width="1"/><rect x="2493.96" y="0.5" width="7.3" height="31" fill="#79b7da" stroke="#4ea3cf" stroke-width="1"/><rect x="2504.15" y="0.5" width="7.3" height="31" fill="#79b7da" stroke="#4ea3cf" stroke-width="1"/><rect x="2514.34" y="0.5" width="7.3" height="31" fill="#79b7da" stroke="#4ea3cf" stroke-width="1"/><rect x="2555.10" y="0.5" width="7.3" height="31" fill="#79b7da" stroke="#4ea3cf" stroke-width="1"/></svg>
<div style="left:2648.3px;top:1127.9px;width:34px;height:34px;box-sizing:border-box;border-radius:50%;border:2px solid #c9c9c9;background:#4ba0cf"></div>
<span style="left:2656.21px;top:1134px;font-size:21.83px;color:#fff;font-weight:700">M</span>
<div style="left:2688.3px;top:1127.9px;width:34px;height:34px;box-sizing:border-box;border-radius:50%;border:2px solid #c9c9c9;background:#fff"></div>
<span style="left:2697.68px;top:1134px;font-size:21.83px;color:#181818;font-weight:700">E</span>
<div style="left:2728.2px;top:1127.9px;width:34px;height:34px;box-sizing:border-box;border-radius:50%;border:2px solid #c9c9c9;background:#fff"></div>
<span style="left:2737.09px;top:1134px;font-size:21.83px;color:#181818;font-weight:700">D</span>
<div style="left:2768.2px;top:1127.9px;width:34px;height:34px;box-sizing:border-box;border-radius:50%;border:2px solid #c9c9c9;background:#fff"></div>
<span style="left:2777.06px;top:1134px;font-size:21.83px;color:#181818;font-weight:700">D</span>
<div style="left:2808.2px;top:1127.9px;width:34px;height:34px;box-sizing:border-box;border-radius:50%;border:2px solid #c9c9c9;background:#fff"></div>
<span style="left:2817.54px;top:1134px;font-size:21.83px;color:#181818;font-weight:700">P</span>
<div style="left:2848.2px;top:1127.9px;width:34px;height:34px;box-sizing:border-box;border-radius:50%;border:2px solid #c9c9c9;background:#fff"></div>
<span style="left:2862.11px;top:1134px;font-size:21.83px;color:#181818;font-weight:700">I</span>
<div style="left:2888.1px;top:1127.9px;width:34px;height:34px;box-sizing:border-box;border-radius:50%;border:2px solid #c9c9c9;background:#fff"></div>
<span style="left:2897.09px;top:1134px;font-size:21.83px;color:#181818;font-weight:700">C</span>
<div style="left:2928.1px;top:1127.9px;width:34px;height:34px;box-sizing:border-box;border-radius:50%;border:2px solid #c9c9c9;background:#fff"></div>
<span style="left:2937.06px;top:1134px;font-size:21.83px;color:#181818;font-weight:700">C</span>
<div style="left:0px;top:1271px;width:3016px;height:2px;background:#c9c9c9"></div>
<span style="left:55.04px;top:1219px;font-size:24.60px;color:#444;letter-spacing:0.284px;-webkit-text-stroke:0.28px #444">7</span>
<span style="left:119.56px;top:1217px;font-size:26.65px;color:#0b5cab;letter-spacing:0.141px;-webkit-text-stroke:0.28px #0b5cab">Grand Hotels &amp; Resorts Ltd New Business</span>
<span style="left:719.84px;top:1217px;font-size:26.65px;color:#c23934;letter-spacing:0.626px;-webkit-text-stroke:0.7px #c23934">Oct 23, 2...</span>
<svg style="left:870.2px;top:1212.08px" width="36" height="36" viewBox="-18 -18 36 36" fill="none" stroke="#c23934" stroke-width="2.1"><circle r="15.05"/><path d="M-8.8 2.3 H8.6 M1.4 -4.9 L9.2 2.3 L1.4 9.5" stroke-width="2.5" stroke-linejoin="round"/></svg>
<span style="left:935.71px;top:1217px;font-size:26.65px;color:#2e844a;letter-spacing:0.478px;-webkit-text-stroke:0.85px #2e844a">Proposal/...</span>
<svg style="left:1086px;top:1212.08px" width="36" height="36" viewBox="-18 -18 36 36" fill="none" stroke="#2e844a" stroke-width="2.1"><circle r="15.05"/><path d="M-8.8 2.3 H8.6 M1.4 -4.9 L9.2 2.3 L1.4 9.5" stroke-width="2.5" stroke-linejoin="round"/></svg>
<div style="left:1152px;top:1222.08px;width:16px;height:16px;border-radius:50%;background:#4d9fdc"></div>
<span style="left:1184.65px;top:1217px;font-size:26.65px;color:#181818;letter-spacing:0.217px;-webkit-text-stroke:0.28px #181818">Commit</span>
<span style="left:1368.75px;top:1217px;font-size:26.65px;color:#0b5cab;letter-spacing:0.053px;-webkit-text-stroke:0.28px #0b5cab">Apex Dynamics</span>
<span style="left:1583.71px;top:1217px;font-size:26.65px;color:#0b5cab;letter-spacing:0.117px;-webkit-text-stroke:0.28px #0b5cab">Parker Wilson</span>
<span style="left:1968.71px;top:1217px;font-size:26.65px;color:#181818;letter-spacing:0.307px;-webkit-text-stroke:0.28px #181818">0</span>
<span style="left:2020.71px;top:1217px;font-size:26.65px;color:#181818;letter-spacing:-0.309px;-webkit-text-stroke:0.28px #181818">$21,015.64</span>
<svg style="left:2240px;top:1194.08px" width="332" height="72" viewBox="2240 -36 332 72"><rect x="2248" y="-1" width="316" height="2" fill="#e2e2e2"/><rect x="2249.40" y="-31.5" width="7.3" height="31.5" fill="#5590e0" stroke="#1a69d8" stroke-width="1"/><rect x="2269.78" y="-31.5" width="7.3" height="31.5" fill="#5590e0" stroke="#1a69d8" stroke-width="1"/><rect x="2279.97" y="-31.5" width="7.3" height="31.5" fill="#5590e0" stroke="#1a69d8" stroke-width="1"/><rect x="2249.40" y="0.5" width="7.3" height="31" fill="#79b7da" stroke="#4ea3cf" stroke-width="1"/><rect x="2269.78" y="0.5" width="7.3" height="31" fill="#79b7da" stroke="#4ea3cf" stroke-width="1"/><rect x="2279.97" y="0.5" width="7.3" height="31" fill="#79b7da" stroke="#4ea3cf" stroke-width="1"/><rect x="2371.68" y="0.5" width="7.3" height="31" fill="#79b7da" stroke="#4ea3cf" stroke-width="1"/><rect x="2453.20" y="0.5" width="7.3" height="31" fill="#79b7da" stroke="#4ea3cf" stroke-width="1"/><rect x="2463.39" y="0.5" width="7.3" height="31" fill="#79b7da" stroke="#4ea3cf" stroke-width="1"/><rect x="2483.77" y="0.5" width="7.3" height="31" fill="#79b7da" stroke="#4ea3cf" stroke-width="1"/><rect x="2493.96" y="0.5" width="7.3" height="31" fill="#79b7da" stroke="#4ea3cf" stroke-width="1"/><rect x="2504.15" y="0.5" width="7.3" height="31" fill="#79b7da" stroke="#4ea3cf" stroke-width="1"/><rect x="2514.34" y="0.5" width="7.3" height="31" fill="#79b7da" stroke="#4ea3cf" stroke-width="1"/><rect x="2534.72" y="0.5" width="7.3" height="31" fill="#79b7da" stroke="#4ea3cf" stroke-width="1"/></svg>
<div style="left:2648.3px;top:1213.1px;width:34px;height:34px;box-sizing:border-box;border-radius:50%;border:2px solid #c9c9c9;background:#4ba0cf"></div>
<span style="left:2656.21px;top:1220px;font-size:21.83px;color:#fff;font-weight:700">M</span>
<div style="left:2688.3px;top:1213.1px;width:34px;height:34px;box-sizing:border-box;border-radius:50%;border:2px solid #c9c9c9;background:#4ba0cf"></div>
<span style="left:2697.68px;top:1220px;font-size:21.83px;color:#fff;font-weight:700">E</span>
<div style="left:2728.2px;top:1213.1px;width:34px;height:34px;box-sizing:border-box;border-radius:50%;border:2px solid #c9c9c9;background:#4ba0cf"></div>
<span style="left:2737.09px;top:1220px;font-size:21.83px;color:#fff;font-weight:700">D</span>
<div style="left:2768.2px;top:1213.1px;width:34px;height:34px;box-sizing:border-box;border-radius:50%;border:2px solid #c9c9c9;background:#4ba0cf"></div>
<span style="left:2777.06px;top:1220px;font-size:21.83px;color:#fff;font-weight:700">D</span>
<div style="left:2808.2px;top:1213.1px;width:34px;height:34px;box-sizing:border-box;border-radius:50%;border:2px solid #c9c9c9;background:#4ba0cf"></div>
<span style="left:2817.54px;top:1220px;font-size:21.83px;color:#fff;font-weight:700">P</span>
<div style="left:2848.2px;top:1213.1px;width:34px;height:34px;box-sizing:border-box;border-radius:50%;border:2px solid #c9c9c9;background:#4ba0cf"></div>
<span style="left:2862.11px;top:1220px;font-size:21.83px;color:#fff;font-weight:700">I</span>
<div style="left:2888.1px;top:1213.1px;width:34px;height:34px;box-sizing:border-box;border-radius:50%;border:2px solid #c9c9c9;background:#fff"></div>
<span style="left:2897.09px;top:1220px;font-size:21.83px;color:#181818;font-weight:700">C</span>
<div style="left:2928.1px;top:1213.1px;width:34px;height:34px;box-sizing:border-box;border-radius:50%;border:2px solid #c9c9c9;background:#4ba0cf"></div>
<span style="left:2937.06px;top:1220px;font-size:21.83px;color:#fff;font-weight:700">C</span>
<div style="left:0px;top:1356px;width:3016px;height:2px;background:#c9c9c9"></div>
<span style="left:55.23px;top:1304px;font-size:24.60px;color:#444;letter-spacing:0.284px;-webkit-text-stroke:0.28px #444">8</span>
<span style="left:119.71px;top:1302px;font-size:26.65px;color:#0b5cab;letter-spacing:0.034px;-webkit-text-stroke:0.28px #0b5cab">Bozeman Builders Inc. New Business</span>
<span style="left:719.84px;top:1302px;font-size:26.65px;color:#181818;letter-spacing:0.639px;-webkit-text-stroke:0.28px #181818">Oct 20, 2025</span>
<span style="left:935.71px;top:1302px;font-size:26.65px;color:#2e844a;letter-spacing:0.771px;-webkit-text-stroke:0.85px #2e844a">Negotiatio...</span>
<svg style="left:1086px;top:1297.26px" width="36" height="36" viewBox="-18 -18 36 36" fill="none" stroke="#2e844a" stroke-width="2.1"><circle r="15.05"/><path d="M-8.8 2.3 H8.6 M1.4 -4.9 L9.2 2.3 L1.4 9.5" stroke-width="2.5" stroke-linejoin="round"/></svg>
<div style="left:1152px;top:1307.26px;width:16px;height:16px;border-radius:50%;background:#4d9fdc"></div>
<span style="left:1184.65px;top:1302px;font-size:26.65px;color:#2e844a;letter-spacing:0.757px;-webkit-text-stroke:0.85px #2e844a">Commit</span>
<svg style="left:1302px;top:1297.26px" width="36" height="36" viewBox="-18 -18 36 36" fill="none" stroke="#2e844a" stroke-width="2.1"><circle r="15.05"/><path d="M-8.8 2.3 H8.6 M1.4 -4.9 L9.2 2.3 L1.4 9.5" stroke-width="2.5" stroke-linejoin="round"/></svg>
<span style="left:1367.55px;top:1302px;font-size:26.65px;color:#0b5cab;letter-spacing:0.266px;-webkit-text-stroke:0.28px #0b5cab">Cyberdyne Sy...</span>
<span style="left:1583.71px;top:1302px;font-size:26.65px;color:#0b5cab;letter-spacing:-0.303px;-webkit-text-stroke:0.28px #0b5cab">Reese Clark</span>
<span style="left:1968.71px;top:1302px;font-size:26.65px;color:#181818;letter-spacing:0.307px;-webkit-text-stroke:0.28px #181818">0</span>
<span style="left:2020.91px;top:1302px;font-size:26.65px;color:#181818;letter-spacing:-0.286px;-webkit-text-stroke:0.28px #181818">$21,714.34</span>
<svg style="left:2240px;top:1279.26px" width="332" height="72" viewBox="2240 -36 332 72"><rect x="2248" y="-1" width="316" height="2" fill="#e2e2e2"/><rect x="2371.68" y="0.5" width="7.3" height="31" fill="#79b7da" stroke="#4ea3cf" stroke-width="1"/><rect x="2524.53" y="0.5" width="7.3" height="31" fill="#79b7da" stroke="#4ea3cf" stroke-width="1"/><rect x="2534.72" y="0.5" width="7.3" height="31" fill="#79b7da" stroke="#4ea3cf" stroke-width="1"/><rect x="2544.91" y="0.5" width="7.3" height="31" fill="#79b7da" stroke="#4ea3cf" stroke-width="1"/><rect x="2555.10" y="0.5" width="7.3" height="31" fill="#79b7da" stroke="#4ea3cf" stroke-width="1"/></svg>
<div style="left:2648.3px;top:1298.3px;width:34px;height:34px;box-sizing:border-box;border-radius:50%;border:2px solid #c9c9c9;background:#4ba0cf"></div>
<span style="left:2656.21px;top:1305px;font-size:21.83px;color:#fff;font-weight:700">M</span>
<div style="left:2688.3px;top:1298.3px;width:34px;height:34px;box-sizing:border-box;border-radius:50%;border:2px solid #c9c9c9;background:#4ba0cf"></div>
<span style="left:2697.68px;top:1305px;font-size:21.83px;color:#fff;font-weight:700">E</span>
<div style="left:2728.2px;top:1298.3px;width:34px;height:34px;box-sizing:border-box;border-radius:50%;border:2px solid #c9c9c9;background:#4ba0cf"></div>
<span style="left:2737.09px;top:1305px;font-size:21.83px;color:#fff;font-weight:700">D</span>
<div style="left:2768.2px;top:1298.3px;width:34px;height:34px;box-sizing:border-box;border-radius:50%;border:2px solid #c9c9c9;background:#4ba0cf"></div>
<span style="left:2777.06px;top:1305px;font-size:21.83px;color:#fff;font-weight:700">D</span>
<div style="left:2808.2px;top:1298.3px;width:34px;height:34px;box-sizing:border-box;border-radius:50%;border:2px solid #c9c9c9;background:#4ba0cf"></div>
<span style="left:2817.54px;top:1305px;font-size:21.83px;color:#fff;font-weight:700">P</span>
<div style="left:2848.2px;top:1298.3px;width:34px;height:34px;box-sizing:border-box;border-radius:50%;border:2px solid #c9c9c9;background:#4ba0cf"></div>
<span style="left:2862.11px;top:1305px;font-size:21.83px;color:#fff;font-weight:700">I</span>
<div style="left:2888.1px;top:1298.3px;width:34px;height:34px;box-sizing:border-box;border-radius:50%;border:2px solid #c9c9c9;background:#4ba0cf"></div>
<span style="left:2897.09px;top:1305px;font-size:21.83px;color:#fff;font-weight:700">C</span>
<div style="left:2928.1px;top:1298.3px;width:34px;height:34px;box-sizing:border-box;border-radius:50%;border:2px solid #c9c9c9;background:#4ba0cf"></div>
<span style="left:2937.06px;top:1305px;font-size:21.83px;color:#fff;font-weight:700">C</span>
<div style="left:0px;top:1441px;width:3016px;height:2px;background:#c9c9c9"></div>
<span style="left:55.15px;top:1390px;font-size:24.60px;color:#444;letter-spacing:0.284px;-webkit-text-stroke:0.28px #444">9</span>
<span style="left:119.56px;top:1388px;font-size:26.65px;color:#0b5cab;letter-spacing:0.052px;-webkit-text-stroke:0.28px #0b5cab">GenePoint 2021</span>
<span style="left:719.84px;top:1388px;font-size:26.65px;color:#181818;letter-spacing:-0.006px;-webkit-text-stroke:0.28px #181818">Oct 17, 2025</span>
<span style="left:935.71px;top:1388px;font-size:26.65px;color:#2e844a;letter-spacing:0.478px;-webkit-text-stroke:0.85px #2e844a">Proposal/...</span>
<svg style="left:1086px;top:1382.44px" width="36" height="36" viewBox="-18 -18 36 36" fill="none" stroke="#2e844a" stroke-width="2.1"><circle r="15.05"/><path d="M-8.8 2.3 H8.6 M1.4 -4.9 L9.2 2.3 L1.4 9.5" stroke-width="2.5" stroke-linejoin="round"/></svg>
<div style="left:1152px;top:1392.44px;width:16px;height:16px;border-radius:50%;background:#4d9fdc"></div>
<span style="left:1184.65px;top:1388px;font-size:26.65px;color:#2e844a;letter-spacing:0.757px;-webkit-text-stroke:0.85px #2e844a">Commit</span>
<svg style="left:1302px;top:1382.44px" width="36" height="36" viewBox="-18 -18 36 36" fill="none" stroke="#2e844a" stroke-width="2.1"><circle r="15.05"/><path d="M-8.8 2.3 H8.6 M1.4 -4.9 L9.2 2.3 L1.4 9.5" stroke-width="2.5" stroke-linejoin="round"/></svg>
<span style="left:1367.71px;top:1388px;font-size:26.65px;color:#0b5cab;letter-spacing:0.104px;-webkit-text-stroke:0.28px #0b5cab">Pinnacle Global</span>
<span style="left:1583.71px;top:1388px;font-size:26.65px;color:#0b5cab;letter-spacing:-0.173px;-webkit-text-stroke:0.28px #0b5cab">Rowan Adams</span>
<span style="left:1968.71px;top:1388px;font-size:26.65px;color:#181818;letter-spacing:0.307px;-webkit-text-stroke:0.28px #181818">0</span>
<span style="left:2016.51px;top:1388px;font-size:26.65px;color:#181818;letter-spacing:0.181px;-webkit-text-stroke:0.28px #181818">$22,076....</span>
<svg style="left:2240px;top:1364.44px" width="332" height="72" viewBox="2240 -36 332 72"><rect x="2248" y="-1" width="316" height="2" fill="#e2e2e2"/><rect x="2249.40" y="-31.5" width="7.3" height="31.5" fill="#5590e0" stroke="#1a69d8" stroke-width="1"/><rect x="2249.40" y="0.5" width="7.3" height="31" fill="#79b7da" stroke="#4ea3cf" stroke-width="1"/><rect x="2269.78" y="0.5" width="7.3" height="31" fill="#79b7da" stroke="#4ea3cf" stroke-width="1"/><rect x="2371.68" y="0.5" width="7.3" height="31" fill="#79b7da" stroke="#4ea3cf" stroke-width="1"/><rect x="2463.39" y="0.5" width="7.3" height="31" fill="#79b7da" stroke="#4ea3cf" stroke-width="1"/><rect x="2473.58" y="0.5" width="7.3" height="31" fill="#79b7da" stroke="#4ea3cf" stroke-width="1"/><rect x="2555.10" y="0.5" width="7.3" height="31" fill="#79b7da" stroke="#4ea3cf" stroke-width="1"/></svg>
<div style="left:2648.3px;top:1383.4px;width:34px;height:34px;box-sizing:border-box;border-radius:50%;border:2px solid #c9c9c9;background:#4ba0cf"></div>
<span style="left:2656.21px;top:1390px;font-size:21.83px;color:#fff;font-weight:700">M</span>
<div style="left:2688.3px;top:1383.4px;width:34px;height:34px;box-sizing:border-box;border-radius:50%;border:2px solid #c9c9c9;background:#4ba0cf"></div>
<span style="left:2697.68px;top:1390px;font-size:21.83px;color:#fff;font-weight:700">E</span>
<div style="left:2728.2px;top:1383.4px;width:34px;height:34px;box-sizing:border-box;border-radius:50%;border:2px solid #c9c9c9;background:#4ba0cf"></div>
<span style="left:2737.09px;top:1390px;font-size:21.83px;color:#fff;font-weight:700">D</span>
<div style="left:2768.2px;top:1383.4px;width:34px;height:34px;box-sizing:border-box;border-radius:50%;border:2px solid #c9c9c9;background:#4ba0cf"></div>
<span style="left:2777.06px;top:1390px;font-size:21.83px;color:#fff;font-weight:700">D</span>
<div style="left:2808.2px;top:1383.4px;width:34px;height:34px;box-sizing:border-box;border-radius:50%;border:2px solid #c9c9c9;background:#4ba0cf"></div>
<span style="left:2817.54px;top:1390px;font-size:21.83px;color:#fff;font-weight:700">P</span>
<div style="left:2848.2px;top:1383.4px;width:34px;height:34px;box-sizing:border-box;border-radius:50%;border:2px solid #c9c9c9;background:#4ba0cf"></div>
<span style="left:2862.11px;top:1390px;font-size:21.83px;color:#fff;font-weight:700">I</span>
<div style="left:2888.1px;top:1383.4px;width:34px;height:34px;box-sizing:border-box;border-radius:50%;border:2px solid #c9c9c9;background:#4ba0cf"></div>
<span style="left:2897.09px;top:1390px;font-size:21.83px;color:#fff;font-weight:700">C</span>
<div style="left:2928.1px;top:1383.4px;width:34px;height:34px;box-sizing:border-box;border-radius:50%;border:2px solid #c9c9c9;background:#4ba0cf"></div>
<span style="left:2937.06px;top:1390px;font-size:21.83px;color:#fff;font-weight:700">C</span>
<div style="left:0px;top:1527px;width:3016px;height:2px;background:#c9c9c9"></div>
<span style="left:55.03px;top:1475px;font-size:24.60px;color:#444;letter-spacing:0.375px;-webkit-text-stroke:0.28px #444">10</span>
<span style="left:119.71px;top:1473px;font-size:26.65px;color:#0b5cab;letter-spacing:0.392px;-webkit-text-stroke:0.28px #0b5cab">Pyramid Construction Inc. Update</span>
<span style="left:719.84px;top:1473px;font-size:26.65px;color:#c23934;letter-spacing:0.626px;-webkit-text-stroke:0.7px #c23934">Oct 30, 2...</span>
<svg style="left:870.2px;top:1467.6200000000001px" width="36" height="36" viewBox="-18 -18 36 36" fill="none" stroke="#c23934" stroke-width="2.1"><circle r="15.05"/><path d="M-8.8 2.3 H8.6 M1.4 -4.9 L9.2 2.3 L1.4 9.5" stroke-width="2.5" stroke-linejoin="round"/></svg>
<span style="left:935.71px;top:1473px;font-size:26.65px;color:#2e844a;letter-spacing:0.478px;-webkit-text-stroke:0.85px #2e844a">Proposal/...</span>
<svg style="left:1086px;top:1467.6200000000001px" width="36" height="36" viewBox="-18 -18 36 36" fill="none" stroke="#2e844a" stroke-width="2.1"><circle r="15.05"/><path d="M-8.8 2.3 H8.6 M1.4 -4.9 L9.2 2.3 L1.4 9.5" stroke-width="2.5" stroke-linejoin="round"/></svg>
<div style="left:1152px;top:1477.6200000000001px;width:16px;height:16px;border-radius:50%;background:#4d9fdc"></div>
<span style="left:1184.65px;top:1473px;font-size:26.65px;color:#2e844a;letter-spacing:0.757px;-webkit-text-stroke:0.85px #2e844a">Commit</span>
<svg style="left:1302px;top:1467.6200000000001px" width="36" height="36" viewBox="-18 -18 36 36" fill="none" stroke="#2e844a" stroke-width="2.1"><circle r="15.05"/><path d="M-8.8 2.3 H8.6 M1.4 -4.9 L9.2 2.3 L1.4 9.5" stroke-width="2.5" stroke-linejoin="round"/></svg>
<span style="left:1367.49px;top:1473px;font-size:26.65px;color:#0b5cab;letter-spacing:0.154px;-webkit-text-stroke:0.28px #0b5cab">Skyline Enterp...</span>
<span style="left:1583.71px;top:1473px;font-size:26.65px;color:#0b5cab;letter-spacing:-0.303px;-webkit-text-stroke:0.28px #0b5cab">Reese Clark</span>
<span style="left:1968.71px;top:1473px;font-size:26.65px;color:#181818;letter-spacing:0.307px;-webkit-text-stroke:0.28px #181818">0</span>
<span style="left:2016.51px;top:1473px;font-size:26.65px;color:#181818;letter-spacing:0.341px;-webkit-text-stroke:0.28px #181818">$22,395....</span>
<svg style="left:2240px;top:1449.62px" width="332" height="72" viewBox="2240 -36 332 72"><rect x="2248" y="-1" width="316" height="2" fill="#e2e2e2"/><rect x="2249.40" y="-31.5" width="7.3" height="31.5" fill="#5590e0" stroke="#1a69d8" stroke-width="1"/><rect x="2279.97" y="-31.5" width="7.3" height="31.5" fill="#5590e0" stroke="#1a69d8" stroke-width="1"/><rect x="2249.40" y="0.5" width="7.3" height="31" fill="#79b7da" stroke="#4ea3cf" stroke-width="1"/><rect x="2259.59" y="0.5" width="7.3" height="31" fill="#79b7da" stroke="#4ea3cf" stroke-width="1"/><rect x="2279.97" y="0.5" width="7.3" height="31" fill="#79b7da" stroke="#4ea3cf" stroke-width="1"/><rect x="2371.68" y="0.5" width="7.3" height="31" fill="#79b7da" stroke="#4ea3cf" stroke-width="1"/><rect x="2443.01" y="0.5" width="7.3" height="31" fill="#79b7da" stroke="#4ea3cf" stroke-width="1"/><rect x="2473.58" y="0.5" width="7.3" height="31" fill="#79b7da" stroke="#4ea3cf" stroke-width="1"/><rect x="2544.91" y="0.5" width="7.3" height="31" fill="#79b7da" stroke="#4ea3cf" stroke-width="1"/></svg>
<div style="left:2648.3px;top:1468.6px;width:34px;height:34px;box-sizing:border-box;border-radius:50%;border:2px solid #c9c9c9;background:#4ba0cf"></div>
<span style="left:2656.21px;top:1475px;font-size:21.83px;color:#fff;font-weight:700">M</span>
<div style="left:2688.3px;top:1468.6px;width:34px;height:34px;box-sizing:border-box;border-radius:50%;border:2px solid #c9c9c9;background:#4ba0cf"></div>
<span style="left:2697.68px;top:1475px;font-size:21.83px;color:#fff;font-weight:700">E</span>
<div style="left:2728.2px;top:1468.6px;width:34px;height:34px;box-sizing:border-box;border-radius:50%;border:2px solid #c9c9c9;background:#4ba0cf"></div>
<span style="left:2737.09px;top:1475px;font-size:21.83px;color:#fff;font-weight:700">D</span>
<div style="left:2768.2px;top:1468.6px;width:34px;height:34px;box-sizing:border-box;border-radius:50%;border:2px solid #c9c9c9;background:#4ba0cf"></div>
<span style="left:2777.06px;top:1475px;font-size:21.83px;color:#fff;font-weight:700">D</span>
<div style="left:2808.2px;top:1468.6px;width:34px;height:34px;box-sizing:border-box;border-radius:50%;border:2px solid #c9c9c9;background:#fff"></div>
<span style="left:2817.54px;top:1475px;font-size:21.83px;color:#181818;font-weight:700">P</span>
<div style="left:2848.2px;top:1468.6px;width:34px;height:34px;box-sizing:border-box;border-radius:50%;border:2px solid #c9c9c9;background:#4ba0cf"></div>
<span style="left:2862.11px;top:1475px;font-size:21.83px;color:#fff;font-weight:700">I</span>
<div style="left:2888.1px;top:1468.6px;width:34px;height:34px;box-sizing:border-box;border-radius:50%;border:2px solid #c9c9c9;background:#4ba0cf"></div>
<span style="left:2897.09px;top:1475px;font-size:21.83px;color:#fff;font-weight:700">C</span>
<div style="left:2928.1px;top:1468.6px;width:34px;height:34px;box-sizing:border-box;border-radius:50%;border:2px solid #c9c9c9;background:#4ba0cf"></div>
<span style="left:2937.06px;top:1475px;font-size:21.83px;color:#fff;font-weight:700">C</span>
<div style="left:0px;top:1612px;width:3016px;height:2px;background:#c9c9c9"></div>
<span style="left:55.03px;top:1560px;font-size:24.60px;color:#444;letter-spacing:2.444px;-webkit-text-stroke:0.28px #444">11</span>
<span style="left:119.71px;top:1558px;font-size:26.65px;color:#0b5cab;letter-spacing:0.295px;-webkit-text-stroke:0.28px #0b5cab">Burlington Textiles Corp of America New Busin...</span>
<span style="left:719.84px;top:1558px;font-size:26.65px;color:#181818;letter-spacing:0.639px;-webkit-text-stroke:0.28px #181818">Oct 20, 2025</span>
<span style="left:935.71px;top:1558px;font-size:26.65px;color:#2e844a;letter-spacing:0.771px;-webkit-text-stroke:0.85px #2e844a">Negotiatio...</span>
<svg style="left:1086px;top:1552.8000000000002px" width="36" height="36" viewBox="-18 -18 36 36" fill="none" stroke="#2e844a" stroke-width="2.1"><circle r="15.05"/><path d="M-8.8 2.3 H8.6 M1.4 -4.9 L9.2 2.3 L1.4 9.5" stroke-width="2.5" stroke-linejoin="round"/></svg>
<div style="left:1152px;top:1562.8000000000002px;width:16px;height:16px;border-radius:50%;background:#4d9fdc"></div>
<span style="left:1184.65px;top:1558px;font-size:26.65px;color:#2e844a;letter-spacing:0.757px;-webkit-text-stroke:0.85px #2e844a">Commit</span>
<svg style="left:1302px;top:1552.8000000000002px" width="36" height="36" viewBox="-18 -18 36 36" fill="none" stroke="#2e844a" stroke-width="2.1"><circle r="15.05"/><path d="M-8.8 2.3 H8.6 M1.4 -4.9 L9.2 2.3 L1.4 9.5" stroke-width="2.5" stroke-linejoin="round"/></svg>
<span style="left:1367.55px;top:1558px;font-size:26.65px;color:#0b5cab;letter-spacing:0.284px;-webkit-text-stroke:0.28px #0b5cab">Catalyst Innov...</span>
<span style="left:1583.71px;top:1558px;font-size:26.65px;color:#0b5cab;letter-spacing:-0.173px;-webkit-text-stroke:0.28px #0b5cab">Rowan Adams</span>
<span style="left:1968.97px;top:1558px;font-size:26.65px;color:#181818;letter-spacing:0.307px;-webkit-text-stroke:0.28px #181818">1</span>
<span style="left:2016.51px;top:1558px;font-size:26.65px;color:#181818;letter-spacing:0.381px;-webkit-text-stroke:0.28px #181818">$25,886....</span>
<svg style="left:2240px;top:1534.80px" width="332" height="72" viewBox="2240 -36 332 72"><rect x="2248" y="-1" width="316" height="2" fill="#e2e2e2"/><rect x="2279.97" y="-31.5" width="7.3" height="31.5" fill="#5590e0" stroke="#1a69d8" stroke-width="1"/><rect x="2310.54" y="-31.5" width="7.3" height="31.5" fill="#5590e0" stroke="#1a69d8" stroke-width="1"/><rect x="2330.92" y="-31.5" width="7.3" height="31.5" fill="#5590e0" stroke="#1a69d8" stroke-width="1"/><rect x="2249.40" y="0.5" width="7.3" height="31" fill="#79b7da" stroke="#4ea3cf" stroke-width="1"/><rect x="2279.97" y="0.5" width="7.3" height="31" fill="#79b7da" stroke="#4ea3cf" stroke-width="1"/><rect x="2310.54" y="0.5" width="7.3" height="31" fill="#79b7da" stroke="#4ea3cf" stroke-width="1"/><rect x="2330.92" y="0.5" width="7.3" height="31" fill="#79b7da" stroke="#4ea3cf" stroke-width="1"/><rect x="2371.68" y="0.5" width="7.3" height="31" fill="#79b7da" stroke="#4ea3cf" stroke-width="1"/><rect x="2443.01" y="0.5" width="7.3" height="31" fill="#79b7da" stroke="#4ea3cf" stroke-width="1"/><rect x="2453.20" y="0.5" width="7.3" height="31" fill="#79b7da" stroke="#4ea3cf" stroke-width="1"/><rect x="2473.58" y="0.5" width="7.3" height="31" fill="#79b7da" stroke="#4ea3cf" stroke-width="1"/></svg>
<div style="left:2648.3px;top:1553.8px;width:34px;height:34px;box-sizing:border-box;border-radius:50%;border:2px solid #c9c9c9;background:#fff"></div>
<span style="left:2656.21px;top:1560px;font-size:21.83px;color:#181818;font-weight:700">M</span>
<div style="left:2688.3px;top:1553.8px;width:34px;height:34px;box-sizing:border-box;border-radius:50%;border:2px solid #c9c9c9;background:#4ba0cf"></div>
<span style="left:2697.68px;top:1560px;font-size:21.83px;color:#fff;font-weight:700">E</span>
<div style="left:2728.2px;top:1553.8px;width:34px;height:34px;box-sizing:border-box;border-radius:50%;border:2px solid #c9c9c9;background:#4ba0cf"></div>
<span style="left:2737.09px;top:1560px;font-size:21.83px;color:#fff;font-weight:700">D</span>
<div style="left:2768.2px;top:1553.8px;width:34px;height:34px;box-sizing:border-box;border-radius:50%;border:2px solid #c9c9c9;background:#4ba0cf"></div>
<span style="left:2777.06px;top:1560px;font-size:21.83px;color:#fff;font-weight:700">D</span>
<div style="left:2808.2px;top:1553.8px;width:34px;height:34px;box-sizing:border-box;border-radius:50%;border:2px solid #c9c9c9;background:#4ba0cf"></div>
<span style="left:2817.54px;top:1560px;font-size:21.83px;color:#fff;font-weight:700">P</span>
<div style="left:2848.2px;top:1553.8px;width:34px;height:34px;box-sizing:border-box;border-radius:50%;border:2px solid #c9c9c9;background:#4ba0cf"></div>
<span style="left:2862.11px;top:1560px;font-size:21.83px;color:#fff;font-weight:700">I</span>
<div style="left:2888.1px;top:1553.8px;width:34px;height:34px;box-sizing:border-box;border-radius:50%;border:2px solid #c9c9c9;background:#4ba0cf"></div>
<span style="left:2897.09px;top:1560px;font-size:21.83px;color:#fff;font-weight:700">C</span>
<div style="left:2928.1px;top:1553.8px;width:34px;height:34px;box-sizing:border-box;border-radius:50%;border:2px solid #c9c9c9;background:#4ba0cf"></div>
<span style="left:2937.06px;top:1560px;font-size:21.83px;color:#fff;font-weight:700">C</span>
<div style="left:0px;top:1697px;width:3016px;height:2px;background:#c9c9c9"></div>
<span style="left:55.03px;top:1645px;font-size:24.60px;color:#444;letter-spacing:0.652px;-webkit-text-stroke:0.28px #444">12</span>
<span style="left:119.71px;top:1643px;font-size:26.65px;color:#0b5cab;letter-spacing:0.349px;-webkit-text-stroke:0.28px #0b5cab">Pyramid Construction Inc. 2021</span>
<span style="left:719.84px;top:1643px;font-size:26.65px;color:#181818;letter-spacing:0.639px;-webkit-text-stroke:0.28px #181818">Oct 20, 2025</span>
<span style="left:935.71px;top:1643px;font-size:26.65px;color:#2e844a;letter-spacing:0.771px;-webkit-text-stroke:0.85px #2e844a">Negotiatio...</span>
<svg style="left:1086px;top:1637.98px" width="36" height="36" viewBox="-18 -18 36 36" fill="none" stroke="#2e844a" stroke-width="2.1"><circle r="15.05"/><path d="M-8.8 2.3 H8.6 M1.4 -4.9 L9.2 2.3 L1.4 9.5" stroke-width="2.5" stroke-linejoin="round"/></svg>
<div style="left:1152px;top:1647.98px;width:16px;height:16px;border-radius:50%;background:#4d9fdc"></div>
<span style="left:1184.65px;top:1643px;font-size:26.65px;color:#2e844a;letter-spacing:0.757px;-webkit-text-stroke:0.85px #2e844a">Commit</span>
<svg style="left:1302px;top:1637.98px" width="36" height="36" viewBox="-18 -18 36 36" fill="none" stroke="#2e844a" stroke-width="2.1"><circle r="15.05"/><path d="M-8.8 2.3 H8.6 M1.4 -4.9 L9.2 2.3 L1.4 9.5" stroke-width="2.5" stroke-linejoin="round"/></svg>
<span style="left:1367.55px;top:1643px;font-size:26.65px;color:#0b5cab;letter-spacing:0.340px;-webkit-text-stroke:0.28px #0b5cab">Crest Solutions</span>
<span style="left:1584.28px;top:1643px;font-size:26.65px;color:#0b5cab;letter-spacing:0.261px;-webkit-text-stroke:0.28px #0b5cab">Jordan Brown</span>
<span style="left:1968.71px;top:1643px;font-size:26.65px;color:#181818;letter-spacing:0.307px;-webkit-text-stroke:0.28px #181818">0</span>
<span style="left:2020.11px;top:1643px;font-size:26.65px;color:#181818;letter-spacing:-0.154px;-webkit-text-stroke:0.28px #181818">$26,106.16</span>
<svg style="left:2240px;top:1619.98px" width="332" height="72" viewBox="2240 -36 332 72"><rect x="2248" y="-1" width="316" height="2" fill="#e2e2e2"/><rect x="2371.68" y="0.5" width="7.3" height="31" fill="#79b7da" stroke="#4ea3cf" stroke-width="1"/><rect x="2483.77" y="0.5" width="7.3" height="31" fill="#79b7da" stroke="#4ea3cf" stroke-width="1"/><rect x="2493.96" y="0.5" width="7.3" height="31" fill="#79b7da" stroke="#4ea3cf" stroke-width="1"/><rect x="2514.34" y="0.5" width="7.3" height="31" fill="#79b7da" stroke="#4ea3cf" stroke-width="1"/><rect x="2524.53" y="0.5" width="7.3" height="31" fill="#79b7da" stroke="#4ea3cf" stroke-width="1"/><rect x="2544.91" y="0.5" width="7.3" height="31" fill="#79b7da" stroke="#4ea3cf" stroke-width="1"/></svg>
<div style="left:2648.3px;top:1639.0px;width:34px;height:34px;box-sizing:border-box;border-radius:50%;border:2px solid #c9c9c9;background:#fff"></div>
<span style="left:2656.21px;top:1646px;font-size:21.83px;color:#181818;font-weight:700">M</span>
<div style="left:2688.3px;top:1639.0px;width:34px;height:34px;box-sizing:border-box;border-radius:50%;border:2px solid #c9c9c9;background:#4ba0cf"></div>
<span style="left:2697.68px;top:1646px;font-size:21.83px;color:#fff;font-weight:700">E</span>
<div style="left:2728.2px;top:1639.0px;width:34px;height:34px;box-sizing:border-box;border-radius:50%;border:2px solid #c9c9c9;background:#fff"></div>
<span style="left:2737.09px;top:1646px;font-size:21.83px;color:#181818;font-weight:700">D</span>
<div style="left:2768.2px;top:1639.0px;width:34px;height:34px;box-sizing:border-box;border-radius:50%;border:2px solid #c9c9c9;background:#fff"></div>
<span style="left:2777.06px;top:1646px;font-size:21.83px;color:#181818;font-weight:700">D</span>
<div style="left:2808.2px;top:1639.0px;width:34px;height:34px;box-sizing:border-box;border-radius:50%;border:2px solid #c9c9c9;background:#fff"></div>
<span style="left:2817.54px;top:1646px;font-size:21.83px;color:#181818;font-weight:700">P</span>
<div style="left:2848.2px;top:1639.0px;width:34px;height:34px;box-sizing:border-box;border-radius:50%;border:2px solid #c9c9c9;background:#4ba0cf"></div>
<span style="left:2862.11px;top:1646px;font-size:21.83px;color:#fff;font-weight:700">I</span>
<div style="left:2888.1px;top:1639.0px;width:34px;height:34px;box-sizing:border-box;border-radius:50%;border:2px solid #c9c9c9;background:#fff"></div>
<span style="left:2897.09px;top:1646px;font-size:21.83px;color:#181818;font-weight:700">C</span>
<div style="left:2928.1px;top:1639.0px;width:34px;height:34px;box-sizing:border-box;border-radius:50%;border:2px solid #c9c9c9;background:#fff"></div>
<span style="left:2937.06px;top:1646px;font-size:21.83px;color:#181818;font-weight:700">C</span>
<div style="left:0px;top:1782px;width:3016px;height:2px;background:#c9c9c9"></div>
<span style="left:55.03px;top:1730px;font-size:24.60px;color:#444;letter-spacing:0.496px;-webkit-text-stroke:0.28px #444">13</span>
<span style="left:119.71px;top:1728px;font-size:26.65px;color:#0b5cab;letter-spacing:0.282px;-webkit-text-stroke:0.28px #0b5cab">Dickenson plc Maintenance</span>
<span style="left:719.84px;top:1728px;font-size:26.65px;color:#c23934;letter-spacing:0.626px;-webkit-text-stroke:0.7px #c23934">Oct 26, 2...</span>
<svg style="left:870.2px;top:1723.16px" width="36" height="36" viewBox="-18 -18 36 36" fill="none" stroke="#c23934" stroke-width="2.1"><circle r="15.05"/><path d="M-8.8 2.3 H8.6 M1.4 -4.9 L9.2 2.3 L1.4 9.5" stroke-width="2.5" stroke-linejoin="round"/></svg>
<span style="left:935.71px;top:1728px;font-size:26.65px;color:#2e844a;letter-spacing:0.478px;-webkit-text-stroke:0.85px #2e844a">Proposal/...</span>
<svg style="left:1086px;top:1723.16px" width="36" height="36" viewBox="-18 -18 36 36" fill="none" stroke="#2e844a" stroke-width="2.1"><circle r="15.05"/><path d="M-8.8 2.3 H8.6 M1.4 -4.9 L9.2 2.3 L1.4 9.5" stroke-width="2.5" stroke-linejoin="round"/></svg>
<div style="left:1152px;top:1733.16px;width:16px;height:16px;border-radius:50%;background:#4d9fdc"></div>
<span style="left:1184.65px;top:1728px;font-size:26.65px;color:#181818;letter-spacing:0.217px;-webkit-text-stroke:0.28px #181818">Commit</span>
<span style="left:1367.49px;top:1728px;font-size:26.65px;color:#0b5cab;letter-spacing:0.399px;-webkit-text-stroke:0.28px #0b5cab">Stark Industries</span>
<span style="left:1584.75px;top:1728px;font-size:26.65px;color:#0b5cab;letter-spacing:0.050px;-webkit-text-stroke:0.28px #0b5cab">Avery Moore</span>
<span style="left:1968.71px;top:1728px;font-size:26.65px;color:#181818;letter-spacing:0.307px;-webkit-text-stroke:0.28px #181818">0</span>
<span style="left:2016.51px;top:1728px;font-size:26.65px;color:#181818;letter-spacing:0.421px;-webkit-text-stroke:0.28px #181818">$28,509....</span>
<svg style="left:2240px;top:1705.16px" width="332" height="72" viewBox="2240 -36 332 72"><rect x="2248" y="-1" width="316" height="2" fill="#e2e2e2"/><rect x="2300.35" y="-31.5" width="7.3" height="31.5" fill="#5590e0" stroke="#1a69d8" stroke-width="1"/><rect x="2310.54" y="-31.5" width="7.3" height="31.5" fill="#5590e0" stroke="#1a69d8" stroke-width="1"/><rect x="2300.35" y="0.5" width="7.3" height="31" fill="#79b7da" stroke="#4ea3cf" stroke-width="1"/><rect x="2310.54" y="0.5" width="7.3" height="31" fill="#79b7da" stroke="#4ea3cf" stroke-width="1"/><rect x="2371.68" y="0.5" width="7.3" height="31" fill="#79b7da" stroke="#4ea3cf" stroke-width="1"/><rect x="2463.39" y="0.5" width="7.3" height="31" fill="#79b7da" stroke="#4ea3cf" stroke-width="1"/><rect x="2473.58" y="0.5" width="7.3" height="31" fill="#79b7da" stroke="#4ea3cf" stroke-width="1"/><rect x="2483.77" y="0.5" width="7.3" height="31" fill="#79b7da" stroke="#4ea3cf" stroke-width="1"/><rect x="2493.96" y="0.5" width="7.3" height="31" fill="#79b7da" stroke="#4ea3cf" stroke-width="1"/><rect x="2514.34" y="0.5" width="7.3" height="31" fill="#79b7da" stroke="#4ea3cf" stroke-width="1"/><rect x="2524.53" y="0.5" width="7.3" height="31" fill="#79b7da" stroke="#4ea3cf" stroke-width="1"/></svg>
<div style="left:2648.3px;top:1724.2px;width:34px;height:34px;box-sizing:border-box;border-radius:50%;border:2px solid #c9c9c9;background:#fff"></div>
<span style="left:2656.21px;top:1731px;font-size:21.83px;color:#181818;font-weight:700">M</span>
<div style="left:2688.3px;top:1724.2px;width:34px;height:34px;box-sizing:border-box;border-radius:50%;border:2px solid #c9c9c9;background:#4ba0cf"></div>
<span style="left:2697.68px;top:1731px;font-size:21.83px;color:#fff;font-weight:700">E</span>
<div style="left:2728.2px;top:1724.2px;width:34px;height:34px;box-sizing:border-box;border-radius:50%;border:2px solid #c9c9c9;background:#4ba0cf"></div>
<span style="left:2737.09px;top:1731px;font-size:21.83px;color:#fff;font-weight:700">D</span>
<div style="left:2768.2px;top:1724.2px;width:34px;height:34px;box-sizing:border-box;border-radius:50%;border:2px solid #c9c9c9;background:#4ba0cf"></div>
<span style="left:2777.06px;top:1731px;font-size:21.83px;color:#fff;font-weight:700">D</span>
<div style="left:2808.2px;top:1724.2px;width:34px;height:34px;box-sizing:border-box;border-radius:50%;border:2px solid #c9c9c9;background:#4ba0cf"></div>
<span style="left:2817.54px;top:1731px;font-size:21.83px;color:#fff;font-weight:700">P</span>
<div style="left:2848.2px;top:1724.2px;width:34px;height:34px;box-sizing:border-box;border-radius:50%;border:2px solid #c9c9c9;background:#fff"></div>
<span style="left:2862.11px;top:1731px;font-size:21.83px;color:#181818;font-weight:700">I</span>
<div style="left:2888.1px;top:1724.2px;width:34px;height:34px;box-sizing:border-box;border-radius:50%;border:2px solid #c9c9c9;background:#fff"></div>
<span style="left:2897.09px;top:1731px;font-size:21.83px;color:#181818;font-weight:700">C</span>
<div style="left:2928.1px;top:1724.2px;width:34px;height:34px;box-sizing:border-box;border-radius:50%;border:2px solid #c9c9c9;background:#4ba0cf"></div>
<span style="left:2937.06px;top:1731px;font-size:21.83px;color:#fff;font-weight:700">C</span>
<span style="left:55.03px;top:1816px;font-size:24.60px;color:#444;letter-spacing:0.135px;-webkit-text-stroke:0.28px #444">14</span>
<span style="left:119.71px;top:1814px;font-size:26.65px;color:#0b5cab;letter-spacing:0.283px;-webkit-text-stroke:0.28px #0b5cab">Express Logistics and Transport Update</span>
<span style="left:719.84px;top:1814px;font-size:26.65px;color:#181818;letter-spacing:0.358px;-webkit-text-stroke:0.28px #181818">Oct 18, 2025</span>
<span style="left:935.71px;top:1814px;font-size:26.65px;color:#2e844a;letter-spacing:0.478px;-webkit-text-stroke:0.85px #2e844a">Proposal/...</span>
<svg style="left:1086px;top:1808.3400000000001px" width="36" height="36" viewBox="-18 -18 36 36" fill="none" stroke="#2e844a" stroke-width="2.1"><circle r="15.05"/><path d="M-8.8 2.3 H8.6 M1.4 -4.9 L9.2 2.3 L1.4 9.5" stroke-width="2.5" stroke-linejoin="round"/></svg>
<div style="left:1152px;top:1818.3400000000001px;width:16px;height:16px;border-radius:50%;background:#4d9fdc"></div>
<span style="left:1184.65px;top:1814px;font-size:26.65px;color:#2e844a;letter-spacing:0.757px;-webkit-text-stroke:0.85px #2e844a">Commit</span>
<svg style="left:1302px;top:1808.3400000000001px" width="36" height="36" viewBox="-18 -18 36 36" fill="none" stroke="#2e844a" stroke-width="2.1"><circle r="15.05"/><path d="M-8.8 2.3 H8.6 M1.4 -4.9 L9.2 2.3 L1.4 9.5" stroke-width="2.5" stroke-linejoin="round"/></svg>
<span style="left:1367.71px;top:1814px;font-size:26.65px;color:#0b5cab;letter-spacing:0.084px;-webkit-text-stroke:0.28px #0b5cab">Beacon Global</span>
<span style="left:1583.71px;top:1814px;font-size:26.65px;color:#0b5cab;letter-spacing:0.172px;-webkit-text-stroke:0.28px #0b5cab">Drew Thomas</span>
<span style="left:1968.71px;top:1814px;font-size:26.65px;color:#181818;letter-spacing:0.307px;-webkit-text-stroke:0.28px #181818">0</span>
<span style="left:2017.31px;top:1814px;font-size:26.65px;color:#181818;letter-spacing:0.212px;-webkit-text-stroke:0.28px #181818">$30,318.79</span>
<svg style="left:2240px;top:1790.34px" width="332" height="72" viewBox="2240 -36 332 72"><rect x="2248" y="-1" width="316" height="2" fill="#e2e2e2"/><rect x="2371.68" y="0.5" width="7.3" height="31" fill="#79b7da" stroke="#4ea3cf" stroke-width="1"/><rect x="2473.58" y="0.5" width="7.3" height="31" fill="#79b7da" stroke="#4ea3cf" stroke-width="1"/><rect x="2493.96" y="0.5" width="7.3" height="31" fill="#79b7da" stroke="#4ea3cf" stroke-width="1"/><rect x="2504.15" y="0.5" width="7.3" height="31" fill="#79b7da" stroke="#4ea3cf" stroke-width="1"/><rect x="2524.53" y="0.5" width="7.3" height="31" fill="#79b7da" stroke="#4ea3cf" stroke-width="1"/><rect x="2534.72" y="0.5" width="7.3" height="31" fill="#79b7da" stroke="#4ea3cf" stroke-width="1"/></svg>
<div style="left:2648.3px;top:1809.3px;width:34px;height:34px;box-sizing:border-box;border-radius:50%;border:2px solid #c9c9c9;background:#fff"></div>
<span style="left:2656.21px;top:1816px;font-size:21.83px;color:#181818;font-weight:700">M</span>
<div style="left:2688.3px;top:1809.3px;width:34px;height:34px;box-sizing:border-box;border-radius:50%;border:2px solid #c9c9c9;background:#4ba0cf"></div>
<span style="left:2697.68px;top:1816px;font-size:21.83px;color:#fff;font-weight:700">E</span>
<div style="left:2728.2px;top:1809.3px;width:34px;height:34px;box-sizing:border-box;border-radius:50%;border:2px solid #c9c9c9;background:#fff"></div>
<span style="left:2737.09px;top:1816px;font-size:21.83px;color:#181818;font-weight:700">D</span>
<div style="left:2768.2px;top:1809.3px;width:34px;height:34px;box-sizing:border-box;border-radius:50%;border:2px solid #c9c9c9;background:#fff"></div>
<span style="left:2777.06px;top:1816px;font-size:21.83px;color:#181818;font-weight:700">D</span>
<div style="left:2808.2px;top:1809.3px;width:34px;height:34px;box-sizing:border-box;border-radius:50%;border:2px solid #c9c9c9;background:#fff"></div>
<span style="left:2817.54px;top:1816px;font-size:21.83px;color:#181818;font-weight:700">P</span>
<div style="left:2848.2px;top:1809.3px;width:34px;height:34px;box-sizing:border-box;border-radius:50%;border:2px solid #c9c9c9;background:#4ba0cf"></div>
<span style="left:2862.11px;top:1816px;font-size:21.83px;color:#fff;font-weight:700">I</span>
<div style="left:2888.1px;top:1809.3px;width:34px;height:34px;box-sizing:border-box;border-radius:50%;border:2px solid #c9c9c9;background:#4ba0cf"></div>
<span style="left:2897.09px;top:1816px;font-size:21.83px;color:#fff;font-weight:700">C</span>
<div style="left:2928.1px;top:1809.3px;width:34px;height:34px;box-sizing:border-box;border-radius:50%;border:2px solid #c9c9c9;background:#fff"></div>
<span style="left:2937.06px;top:1816px;font-size:21.83px;color:#181818;font-weight:700">C</span>
<div style="left:3016px;top:338px;width:8px;height:1521px;background:linear-gradient(90deg,rgba(0,0,0,0.03) 0,rgba(0,0,0,0.1) 50%,rgba(0,0,0,0.215) 100%)"></div>
<div style="left:3018px;top:1859px;width:6px;height:31px;background:linear-gradient(90deg,#fff,#eee)"></div>
</div></body></html>
